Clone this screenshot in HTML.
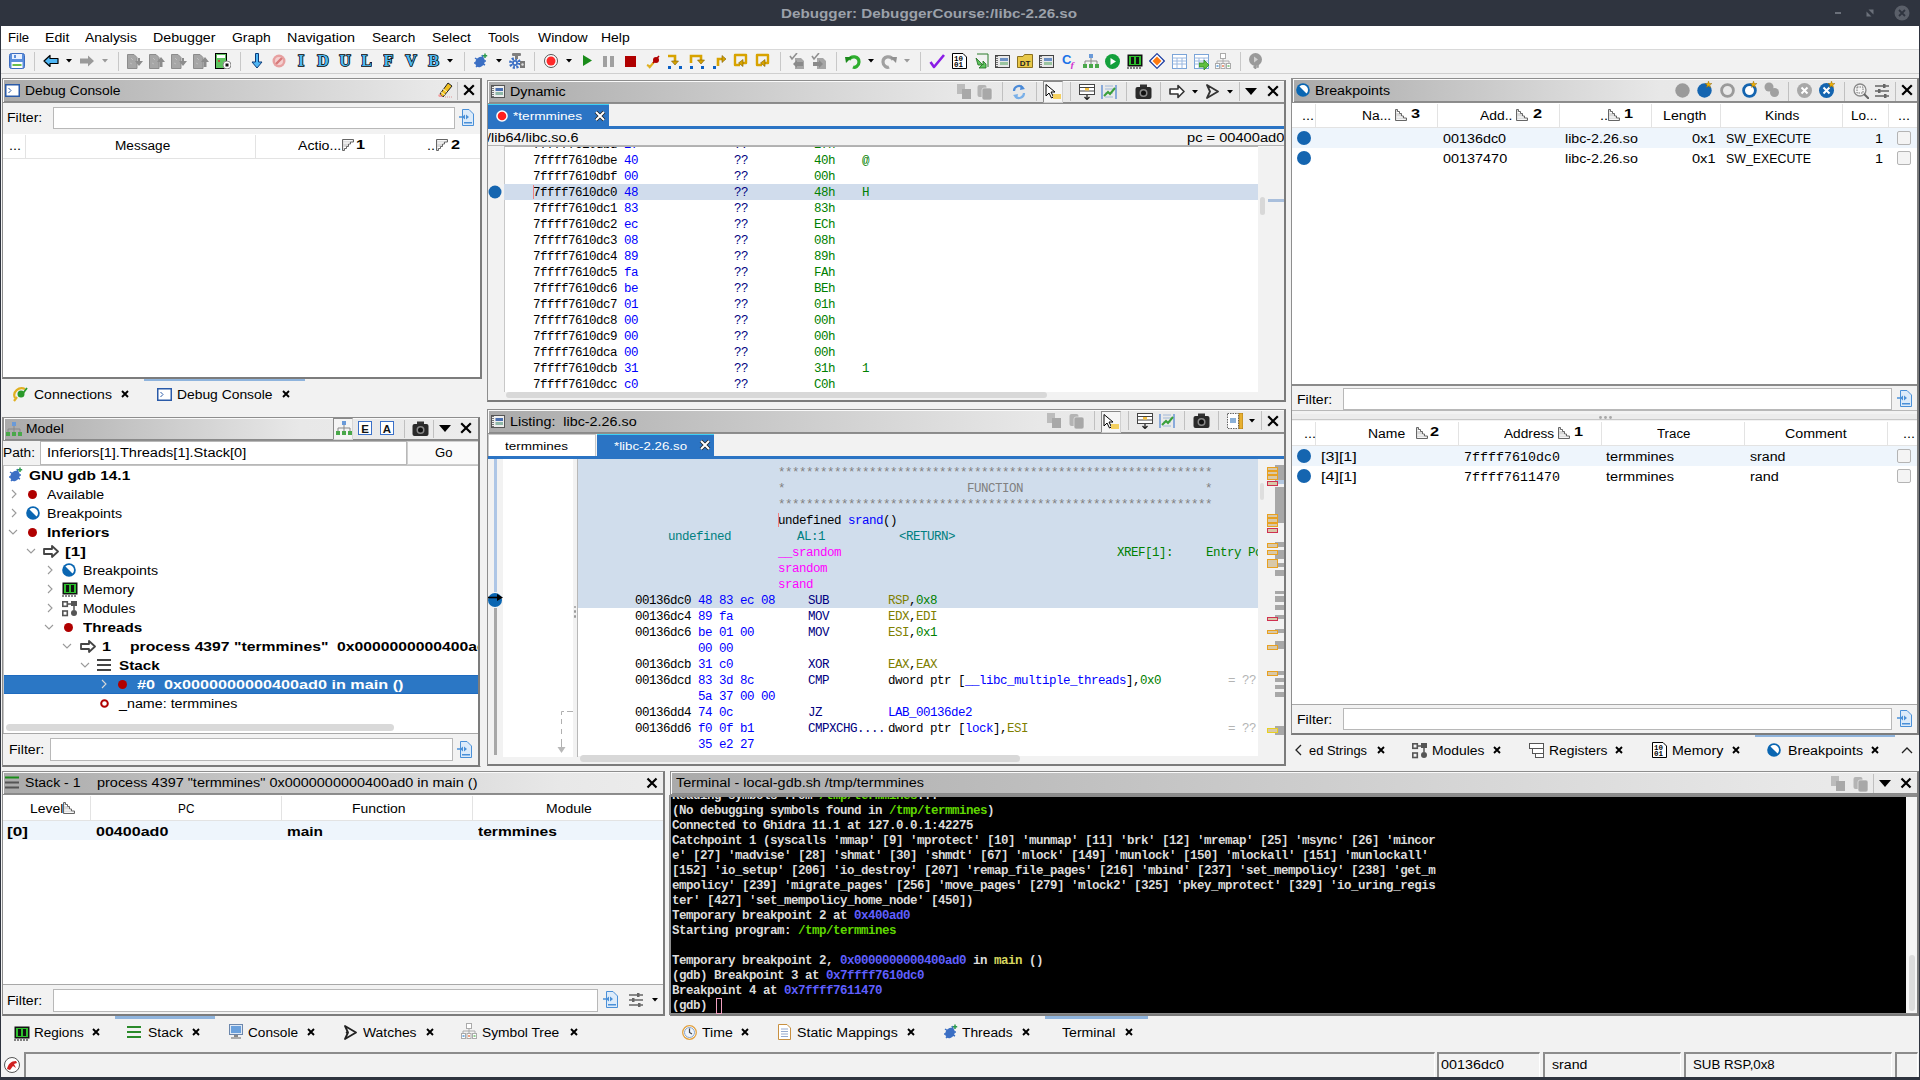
<!DOCTYPE html>
<html><head><meta charset="utf-8"><style>
*{margin:0;padding:0;box-sizing:border-box}
html,body{width:1920px;height:1080px;overflow:hidden;background:#f2f2f2;position:relative}
div,svg{position:absolute}
.t{font-family:"Liberation Sans",sans-serif;white-space:pre}
.m{font-family:"Liberation Mono",monospace;white-space:pre}
</style></head><body>
<div style="left:0px;top:0px;width:1920px;height:1080px;background:#2f343f;"></div>
<div style="left:1px;top:26px;width:1918px;height:1051px;background:#f2f2f2;"></div>
<div class="t" style="left:781px;top:4.00px;height:20px;line-height:20px;font-size:13.52px;color:#9ca1aa;font-weight:bold;transform:scaleX(1.1265);transform-origin:0 0;">Debugger: DebuggerCourse:/libc-2.26.so</div>
<div style="left:1835px;top:12px;width:6px;height:2px;background:#6b707a;"></div>
<svg style="left:1866px;top:9px;" width="8" height="8" viewBox="0 0 8 8"><path d="M2.5 0.5H7.5V5.5Z M0.5 2.5V7.5H5.5Z" fill="#6b707a"/></svg>
<svg style="left:1894px;top:5px;" width="16" height="16" viewBox="0 0 16 16"><circle cx="8" cy="8" r="7.5" fill="#5a5f69"/><path d="M5 5L11 11M11 5L5 11" stroke="#2f343f" stroke-width="1.8"/></svg>
<div style="left:1px;top:26px;width:1918px;height:23px;background:#ffffff;"></div>
<div class="t" style="left:8px;top:27.50px;height:20px;line-height:20px;font-size:13.52px;color:#000;transform:scaleX(0.9693);transform-origin:0 0;">File</div>
<div class="t" style="left:45px;top:27.50px;height:20px;line-height:20px;font-size:13.52px;color:#000;transform:scaleX(1.0488);transform-origin:0 0;">Edit</div>
<div class="t" style="left:85px;top:27.50px;height:20px;line-height:20px;font-size:13.52px;color:#000;transform:scaleX(1.0314);transform-origin:0 0;">Analysis</div>
<div class="t" style="left:153px;top:27.50px;height:20px;line-height:20px;font-size:13.52px;color:#000;transform:scaleX(1.0515);transform-origin:0 0;">Debugger</div>
<div class="t" style="left:232px;top:27.50px;height:20px;line-height:20px;font-size:13.52px;color:#000;transform:scaleX(1.0297);transform-origin:0 0;">Graph</div>
<div class="t" style="left:287px;top:27.50px;height:20px;line-height:20px;font-size:13.52px;color:#000;transform:scaleX(1.0647);transform-origin:0 0;">Navigation</div>
<div class="t" style="left:372px;top:27.50px;height:20px;line-height:20px;font-size:13.52px;color:#000;transform:scaleX(1.0114);transform-origin:0 0;">Search</div>
<div class="t" style="left:432px;top:27.50px;height:20px;line-height:20px;font-size:13.52px;color:#000;transform:scaleX(1.0354);transform-origin:0 0;">Select</div>
<div class="t" style="left:488px;top:27.50px;height:20px;line-height:20px;font-size:13.52px;color:#000;transform:scaleX(0.9844);transform-origin:0 0;">Tools</div>
<div class="t" style="left:538px;top:27.50px;height:20px;line-height:20px;font-size:13.52px;color:#000;transform:scaleX(1.0343);transform-origin:0 0;">Window</div>
<div class="t" style="left:601px;top:27.50px;height:20px;line-height:20px;font-size:13.52px;color:#000;transform:scaleX(1.0343);transform-origin:0 0;">Help</div>
<div style="left:1px;top:49px;width:1918px;height:1px;background:#d9d9d9;"></div>
<div style="left:1px;top:73px;width:1918px;height:1px;background:#cfcfcf;"></div>
<div style="left:2px;top:78px;width:479px;height:25px;background:linear-gradient(to right,#aaaaaa 0%,#e8e8e8 89.4%,#ececec 100%);border:1px solid #8e8e8e;box-shadow:inset 1px 1px 0 #fafafa,inset 0 -1px 0 #8a8a8a;"></div>
<div class="t" style="left:25px;top:80.50px;height:20px;line-height:20px;font-size:13.52px;color:#000;transform:scaleX(1.0251);transform-origin:0 0;">Debug Console</div>
<div style="left:2px;top:103px;width:479px;height:31px;background:#f2f2f2;"></div>
<div class="t" style="left:7px;top:107.50px;height:20px;line-height:20px;font-size:13.52px;color:#000;transform:scaleX(1.0436);transform-origin:0 0;">Filter:</div>
<div style="left:53px;top:107px;width:402px;height:22px;background:#fff;border:1px solid #b8b8b8;"></div>
<div style="left:2px;top:134px;width:478px;height:244px;background:#ffffff;border-left:1px solid #b0b0b0;"></div>
<div style="left:2px;top:134px;width:478px;height:25px;background:#ffffff;border-bottom:1px solid #e3e3e3;"></div>
<div style="left:25px;top:135px;width:1px;height:24px;background:#e3e3e3;"></div>
<div style="left:255px;top:135px;width:1px;height:24px;background:#e3e3e3;"></div>
<div style="left:384px;top:135px;width:1px;height:24px;background:#e3e3e3;"></div>
<div class="t" style="left:9px;top:136.00px;height:20px;line-height:20px;font-size:13.52px;color:#000;transform:scaleX(1.0670);transform-origin:0 0;">...</div>
<div class="t" style="left:115px;top:136.00px;height:20px;line-height:20px;font-size:13.52px;color:#000;transform:scaleX(1.0073);transform-origin:0 0;">Message</div>
<div class="t" style="left:298px;top:136.00px;height:20px;line-height:20px;font-size:13.52px;color:#000;transform:scaleX(1.0474);transform-origin:0 0;">Actio...</div>
<div class="t" style="left:356px;top:134.50px;height:20px;line-height:20px;font-size:13.52px;color:#000;font-weight:bold;transform:scaleX(1.2037);transform-origin:0 0;">1</div>
<div class="t" style="left:427px;top:136.00px;height:20px;line-height:20px;font-size:13.52px;color:#000;transform:scaleX(1.0670);transform-origin:0 0;">..</div>
<div class="t" style="left:451px;top:134.50px;height:20px;line-height:20px;font-size:13.52px;color:#000;font-weight:bold;transform:scaleX(1.2037);transform-origin:0 0;">2</div>
<div style="left:2px;top:377px;width:478px;height:1px;background:#a8a8a8;"></div>
<div style="left:144px;top:378px;width:161px;height:3px;background:#8fb4dd;"></div>
<div class="t" style="left:34px;top:384.50px;height:20px;line-height:20px;font-size:13.52px;color:#000;transform:scaleX(1.0366);transform-origin:0 0;">Connections</div>
<svg style="left:120.5px;top:390px;" width="8" height="8" viewBox="0 0 8 8"><path d="M1 1L7 7M7 1L1 7" stroke="#000" stroke-width="1.9"/></svg>
<div class="t" style="left:177px;top:384.50px;height:20px;line-height:20px;font-size:13.52px;color:#000;transform:scaleX(1.0251);transform-origin:0 0;">Debug Console</div>
<svg style="left:281.5px;top:390px;" width="8" height="8" viewBox="0 0 8 8"><path d="M1 1L7 7M7 1L1 7" stroke="#000" stroke-width="1.9"/></svg>
<div style="left:3px;top:417px;width:476px;height:24px;background:linear-gradient(to right,#aaaaaa 0%,#e8e8e8 62.4%,#ececec 100%);border:1px solid #8e8e8e;box-shadow:inset 1px 1px 0 #fafafa,inset 0 -1px 0 #8a8a8a;"></div>
<div class="t" style="left:26px;top:419.00px;height:20px;line-height:20px;font-size:13.52px;color:#000;transform:scaleX(1.0285);transform-origin:0 0;">Model</div>
<div style="left:333px;top:418px;width:20px;height:22px;background:#f4f4f4;border:1px solid #d6d6d6;border-left-color:#8a8a8a;border-top-color:#8a8a8a;"></div>
<div style="left:3px;top:441px;width:476px;height:24px;background:#f2f2f2;"></div>
<div class="t" style="left:3px;top:442.50px;height:20px;line-height:20px;font-size:13.52px;color:#000;transform:scaleX(1.0128);transform-origin:0 0;">Path:</div>
<div style="left:40px;top:441px;width:367px;height:24px;background:#fff;border:1px solid #b8b8b8;"></div>
<div class="t" style="left:47px;top:442.50px;height:20px;line-height:20px;font-size:13.52px;color:#000;transform:scaleX(1.0783);transform-origin:0 0;">Inferiors[1].Threads[1].Stack[0]</div>
<div style="left:407px;top:441px;width:72px;height:24px;background:#fafafa;border:1px solid #cfcfcf;"></div>
<div class="t" style="left:435px;top:442.50px;height:20px;line-height:20px;font-size:13.52px;color:#000;transform:scaleX(0.9700);transform-origin:0 0;">Go</div>
<div style="left:3px;top:465px;width:476px;height:269px;background:#ffffff;border:1px solid #c4c4c4;"></div>
<div style="left:4px;top:675px;width:474px;height:19px;background:#2b77c5;border-top:1px solid #1f6bbf;border-bottom:1px solid #1f6bbf;"></div>
<div style="left:4px;top:466px;width:474px;height:256px;overflow:hidden">
<div class="t" style="left:25px;top:-0.50px;height:20px;line-height:20px;font-size:13.52px;color:#000;font-weight:bold;transform:scaleX(1.1422);transform-origin:0 0;">GNU gdb 14.1</div>
<div class="t" style="left:43px;top:18.50px;height:20px;line-height:20px;font-size:13.52px;color:#000;transform:scaleX(1.0452);transform-origin:0 0;">Available</div>
<div class="t" style="left:43px;top:37.50px;height:20px;line-height:20px;font-size:13.52px;color:#000;transform:scaleX(1.0518);transform-origin:0 0;">Breakpoints</div>
<div class="t" style="left:43px;top:56.50px;height:20px;line-height:20px;font-size:13.52px;color:#000;font-weight:bold;transform:scaleX(1.1561);transform-origin:0 0;">Inferiors</div>
<div class="t" style="left:61px;top:75.50px;height:20px;line-height:20px;font-size:13.52px;color:#000;font-weight:bold;transform:scaleX(1.2668);transform-origin:0 0;">[1]</div>
<div class="t" style="left:79px;top:94.50px;height:20px;line-height:20px;font-size:13.52px;color:#000;transform:scaleX(1.0518);transform-origin:0 0;">Breakpoints</div>
<div class="t" style="left:79px;top:113.50px;height:20px;line-height:20px;font-size:13.52px;color:#000;transform:scaleX(1.0501);transform-origin:0 0;">Memory</div>
<div class="t" style="left:79px;top:132.50px;height:20px;line-height:20px;font-size:13.52px;color:#000;transform:scaleX(1.0258);transform-origin:0 0;">Modules</div>
<div class="t" style="left:79px;top:151.50px;height:20px;line-height:20px;font-size:13.52px;color:#000;font-weight:bold;transform:scaleX(1.1254);transform-origin:0 0;">Threads</div>
<div class="t" style="left:98px;top:170.50px;height:20px;line-height:20px;font-size:13.52px;color:#000;font-weight:bold;transform:scaleX(1.2037);transform-origin:0 0;">1</div>
<div class="t" style="left:126px;top:170.50px;height:20px;line-height:20px;font-size:13.52px;color:#000;font-weight:bold;transform:scaleX(1.1626);transform-origin:0 0;">process 4397 "termmines"  0x0000000000400ad</div>
<div class="t" style="left:115px;top:189.50px;height:20px;line-height:20px;font-size:13.52px;color:#000;font-weight:bold;transform:scaleX(1.1282);transform-origin:0 0;">Stack</div>
<div class="t" style="left:133px;top:208.50px;height:20px;line-height:20px;font-size:13.52px;color:#fff;font-weight:bold;transform:scaleX(1.1980);transform-origin:0 0;">#0  0x0000000000400ad0 in main ()</div>
<div class="t" style="left:115px;top:227.50px;height:20px;line-height:20px;font-size:13.52px;color:#000;transform:scaleX(1.0572);transform-origin:0 0;">_name: termmines</div>
</div>
<div style="left:6px;top:724px;width:388px;height:7px;background:#d9d9d9;border-radius:4px;"></div>
<div style="left:3px;top:733px;width:476px;height:1px;background:#a8a8a8;"></div>
<div style="left:3px;top:734px;width:476px;height:31px;background:#f2f2f2;"></div>
<div class="t" style="left:9px;top:739.50px;height:20px;line-height:20px;font-size:13.52px;color:#000;transform:scaleX(1.0436);transform-origin:0 0;">Filter:</div>
<div style="left:50px;top:738px;width:403px;height:23px;background:#fff;border:1px solid #b8b8b8;"></div>
<div style="left:2px;top:766px;width:479px;height:1px;background:#b8b8b8;"></div>
<div style="left:2px;top:771px;width:663px;height:24px;background:linear-gradient(to right,#aaaaaa 0%,#e8e8e8 84.2%,#ececec 100%);border:1px solid #8e8e8e;box-shadow:inset 1px 1px 0 #fafafa,inset 0 -1px 0 #8a8a8a;"></div>
<div class="t" style="left:25px;top:773.00px;height:20px;line-height:20px;font-size:13.52px;color:#000;transform:scaleX(1.0402);transform-origin:0 0;">Stack - 1</div>
<div class="t" style="left:97px;top:773.00px;height:20px;line-height:20px;font-size:13.52px;color:#000;transform:scaleX(1.0688);transform-origin:0 0;">process 4397 "termmines" 0x0000000000400ad0 in main ()</div>
<svg style="left:646px;top:777px;" width="12" height="12" viewBox="0 0 12 12"><path d="M1.5 1.5L10.5 10.5M10.5 1.5L1.5 10.5" stroke="#000" stroke-width="2.2" stroke-linecap="butt"/></svg>
<div style="left:2px;top:795px;width:662px;height:190px;background:#ffffff;"></div>
<div style="left:2px;top:795px;width:662px;height:26px;background:#ffffff;border-bottom:1px solid #e3e3e3;"></div>
<div style="left:90px;top:796px;width:1px;height:25px;background:#e3e3e3;"></div>
<div style="left:281px;top:796px;width:1px;height:25px;background:#e3e3e3;"></div>
<div style="left:472px;top:796px;width:1px;height:25px;background:#e3e3e3;"></div>
<div style="left:663px;top:796px;width:1px;height:25px;background:#e3e3e3;"></div>
<div class="t" style="left:30px;top:798.50px;height:20px;line-height:20px;font-size:13.52px;color:#000;transform:scaleX(1.0300);transform-origin:0 0;">Level</div>
<div class="t" style="left:178px;top:798.50px;height:20px;line-height:20px;font-size:13.52px;color:#000;transform:scaleX(0.8740);transform-origin:0 0;">PC</div>
<div class="t" style="left:352px;top:798.50px;height:20px;line-height:20px;font-size:13.52px;color:#000;transform:scaleX(1.0346);transform-origin:0 0;">Function</div>
<div class="t" style="left:546px;top:798.50px;height:20px;line-height:20px;font-size:13.52px;color:#000;transform:scaleX(1.0343);transform-origin:0 0;">Module</div>
<div style="left:2px;top:821px;width:662px;height:19px;background:#eef5fc;"></div>
<div class="t" style="left:7px;top:821.50px;height:20px;line-height:20px;font-size:13.52px;color:#000;font-weight:bold;transform:scaleX(1.2668);transform-origin:0 0;">[0]</div>
<div class="t" style="left:96px;top:821.50px;height:20px;line-height:20px;font-size:13.52px;color:#000;font-weight:bold;transform:scaleX(1.1890);transform-origin:0 0;">00400ad0</div>
<div class="t" style="left:287px;top:821.50px;height:20px;line-height:20px;font-size:13.52px;color:#000;font-weight:bold;transform:scaleX(1.1422);transform-origin:0 0;">main</div>
<div class="t" style="left:478px;top:821.50px;height:20px;line-height:20px;font-size:13.52px;color:#000;font-weight:bold;transform:scaleX(1.1527);transform-origin:0 0;">termmines</div>
<div style="left:2px;top:984px;width:662px;height:1px;background:#a8a8a8;"></div>
<div class="t" style="left:7px;top:990.50px;height:20px;line-height:20px;font-size:13.52px;color:#000;transform:scaleX(1.0436);transform-origin:0 0;">Filter:</div>
<div style="left:53px;top:989px;width:545px;height:23px;background:#fff;border:1px solid #b8b8b8;"></div>
<div style="left:115px;top:1016px;width:100px;height:3px;background:#8fb4dd;"></div>
<div class="t" style="left:34px;top:1022.50px;height:20px;line-height:20px;font-size:13.52px;color:#000;transform:scaleX(1.0027);transform-origin:0 0;">Regions</div>
<svg style="left:91.5px;top:1028px;" width="8" height="8" viewBox="0 0 8 8"><path d="M1 1L7 7M7 1L1 7" stroke="#000" stroke-width="1.9"/></svg>
<div class="t" style="left:148px;top:1022.50px;height:20px;line-height:20px;font-size:13.52px;color:#000;transform:scaleX(1.0323);transform-origin:0 0;">Stack</div>
<svg style="left:191.5px;top:1028px;" width="8" height="8" viewBox="0 0 8 8"><path d="M1 1L7 7M7 1L1 7" stroke="#000" stroke-width="1.9"/></svg>
<div class="t" style="left:248px;top:1022.50px;height:20px;line-height:20px;font-size:13.52px;color:#000;transform:scaleX(1.0091);transform-origin:0 0;">Console</div>
<svg style="left:306.5px;top:1028px;" width="8" height="8" viewBox="0 0 8 8"><path d="M1 1L7 7M7 1L1 7" stroke="#000" stroke-width="1.9"/></svg>
<div class="t" style="left:363px;top:1022.50px;height:20px;line-height:20px;font-size:13.52px;color:#000;transform:scaleX(1.0288);transform-origin:0 0;">Watches</div>
<svg style="left:425.5px;top:1028px;" width="8" height="8" viewBox="0 0 8 8"><path d="M1 1L7 7M7 1L1 7" stroke="#000" stroke-width="1.9"/></svg>
<div class="t" style="left:482px;top:1022.50px;height:20px;line-height:20px;font-size:13.52px;color:#000;transform:scaleX(1.0182);transform-origin:0 0;">Symbol Tree</div>
<svg style="left:569.5px;top:1028px;" width="8" height="8" viewBox="0 0 8 8"><path d="M1 1L7 7M7 1L1 7" stroke="#000" stroke-width="1.9"/></svg>
<div style="left:487px;top:80px;width:798px;height:24px;background:linear-gradient(to right,#aaaaaa 0%,#e8e8e8 59.3%,#ececec 100%);border:1px solid #8e8e8e;box-shadow:inset 1px 1px 0 #fafafa,inset 0 -1px 0 #8a8a8a;"></div>
<div class="t" style="left:510px;top:82.00px;height:20px;line-height:20px;font-size:13.52px;color:#000;transform:scaleX(1.0570);transform-origin:0 0;">Dynamic</div>
<div style="left:487px;top:104px;width:798px;height:25px;background:#f2f2f2;"></div>
<div style="left:488px;top:104px;width:121px;height:23px;background:#2b74c4;border-top:1px solid #3fd0f4;"></div>
<div class="t" style="left:513px;top:106.00px;height:20px;line-height:20px;font-size:11.50px;color:#fff;transform:scaleX(1.1871);transform-origin:0 0;">*termmines</div>
<svg style="left:594px;top:110px;" width="12" height="12" viewBox="0 0 12 12"><path d="M2 2L10 10M10 2L2 10" stroke="#222" stroke-width="3.6"/><path d="M2 2L10 10M10 2L2 10" stroke="#fff" stroke-width="2"/></svg>
<div style="left:487px;top:126px;width:798px;height:3px;background:#2b74c4;"></div>
<div style="left:487px;top:129px;width:798px;height:17px;background:#f2f2f2;"></div>
<div class="t" style="left:487px;top:127.50px;height:20px;line-height:20px;font-size:13.52px;color:#000;transform:scaleX(1.0689);transform-origin:0 0;">/lib64/libc.so.6</div>
<div class="t" style="left:1187px;top:127.50px;height:20px;line-height:20px;font-size:13.52px;color:#000;transform:scaleX(1.0839);transform-origin:0 0;">pc = 00400ad0</div>
<div style="left:487px;top:146px;width:17px;height:252px;background:#f2f2f2;"></div>
<div style="left:504px;top:146px;width:754px;height:246px;background:#ffffff;border-top:1px solid #b0b0b0;border-left:1px solid #c8c8c8;"></div>
<div style="left:1258px;top:146px;width:27px;height:252px;background:#f2f2f2;"></div>
<div style="left:487px;top:145px;width:798px;height:1px;background:#b4b4b4;"></div>
<div style="left:504px;top:184px;width:754px;height:16px;background:#d0dcec;"></div>
<div style="left:505px;top:392px;width:753px;height:7px;background:#f2f2f2;"></div>
<div style="left:506px;top:392px;width:541px;height:6px;background:#d8d8d8;border-radius:3px;"></div>
<div style="left:1260px;top:197px;width:5px;height:18px;background:#d8d8d8;border-radius:3px;"></div>
<div style="left:1268px;top:199px;width:16px;height:3px;background:#a9bfdc;"></div>
<div style="left:487px;top:400px;width:798px;height:1px;background:#a0a0a0;"></div>
<div style="left:504px;top:147px;width:754px;height:245px;overflow:hidden">
<div class="m" style="left:29px;top:-9.80px;height:16px;line-height:16px;font-size:12.5px;letter-spacing:-0.500px;"><span style="color:#000">7ffff7610dbd</span></div>
<div class="m" style="left:120px;top:-9.80px;height:16px;line-height:16px;font-size:12.5px;letter-spacing:-0.500px;"><span style="color:#0000ff">27</span></div>
<div class="m" style="left:230px;top:-9.80px;height:16px;line-height:16px;font-size:12.5px;letter-spacing:-0.500px;"><span style="color:#000080">??</span></div>
<div class="m" style="left:310px;top:-9.80px;height:16px;line-height:16px;font-size:12.5px;letter-spacing:-0.500px;"><span style="color:#008000">27h</span></div>
<div class="m" style="left:29px;top:6.20px;height:16px;line-height:16px;font-size:12.5px;letter-spacing:-0.500px;"><span style="color:#000">7ffff7610dbe</span></div>
<div class="m" style="left:120px;top:6.20px;height:16px;line-height:16px;font-size:12.5px;letter-spacing:-0.500px;"><span style="color:#0000ff">40</span></div>
<div class="m" style="left:230px;top:6.20px;height:16px;line-height:16px;font-size:12.5px;letter-spacing:-0.500px;"><span style="color:#000080">??</span></div>
<div class="m" style="left:310px;top:6.20px;height:16px;line-height:16px;font-size:12.5px;letter-spacing:-0.500px;"><span style="color:#008000">40h</span></div>
<div class="m" style="left:358px;top:6.20px;height:16px;line-height:16px;font-size:12.5px;letter-spacing:-0.500px;"><span style="color:#008000">@</span></div>
<div class="m" style="left:29px;top:22.20px;height:16px;line-height:16px;font-size:12.5px;letter-spacing:-0.500px;"><span style="color:#000">7ffff7610dbf</span></div>
<div class="m" style="left:120px;top:22.20px;height:16px;line-height:16px;font-size:12.5px;letter-spacing:-0.500px;"><span style="color:#0000ff">00</span></div>
<div class="m" style="left:230px;top:22.20px;height:16px;line-height:16px;font-size:12.5px;letter-spacing:-0.500px;"><span style="color:#000080">??</span></div>
<div class="m" style="left:310px;top:22.20px;height:16px;line-height:16px;font-size:12.5px;letter-spacing:-0.500px;"><span style="color:#008000">00h</span></div>
<div class="m" style="left:29px;top:38.20px;height:16px;line-height:16px;font-size:12.5px;letter-spacing:-0.500px;"><span style="color:#000">7ffff7610dc0</span></div>
<div class="m" style="left:120px;top:38.20px;height:16px;line-height:16px;font-size:12.5px;letter-spacing:-0.500px;"><span style="color:#0000ff">48</span></div>
<div class="m" style="left:230px;top:38.20px;height:16px;line-height:16px;font-size:12.5px;letter-spacing:-0.500px;"><span style="color:#000080">??</span></div>
<div class="m" style="left:310px;top:38.20px;height:16px;line-height:16px;font-size:12.5px;letter-spacing:-0.500px;"><span style="color:#008000">48h</span></div>
<div class="m" style="left:358px;top:38.20px;height:16px;line-height:16px;font-size:12.5px;letter-spacing:-0.500px;"><span style="color:#008000">H</span></div>
<div class="m" style="left:29px;top:54.20px;height:16px;line-height:16px;font-size:12.5px;letter-spacing:-0.500px;"><span style="color:#000">7ffff7610dc1</span></div>
<div class="m" style="left:120px;top:54.20px;height:16px;line-height:16px;font-size:12.5px;letter-spacing:-0.500px;"><span style="color:#0000ff">83</span></div>
<div class="m" style="left:230px;top:54.20px;height:16px;line-height:16px;font-size:12.5px;letter-spacing:-0.500px;"><span style="color:#000080">??</span></div>
<div class="m" style="left:310px;top:54.20px;height:16px;line-height:16px;font-size:12.5px;letter-spacing:-0.500px;"><span style="color:#008000">83h</span></div>
<div class="m" style="left:29px;top:70.20px;height:16px;line-height:16px;font-size:12.5px;letter-spacing:-0.500px;"><span style="color:#000">7ffff7610dc2</span></div>
<div class="m" style="left:120px;top:70.20px;height:16px;line-height:16px;font-size:12.5px;letter-spacing:-0.500px;"><span style="color:#0000ff">ec</span></div>
<div class="m" style="left:230px;top:70.20px;height:16px;line-height:16px;font-size:12.5px;letter-spacing:-0.500px;"><span style="color:#000080">??</span></div>
<div class="m" style="left:310px;top:70.20px;height:16px;line-height:16px;font-size:12.5px;letter-spacing:-0.500px;"><span style="color:#008000">ECh</span></div>
<div class="m" style="left:29px;top:86.20px;height:16px;line-height:16px;font-size:12.5px;letter-spacing:-0.500px;"><span style="color:#000">7ffff7610dc3</span></div>
<div class="m" style="left:120px;top:86.20px;height:16px;line-height:16px;font-size:12.5px;letter-spacing:-0.500px;"><span style="color:#0000ff">08</span></div>
<div class="m" style="left:230px;top:86.20px;height:16px;line-height:16px;font-size:12.5px;letter-spacing:-0.500px;"><span style="color:#000080">??</span></div>
<div class="m" style="left:310px;top:86.20px;height:16px;line-height:16px;font-size:12.5px;letter-spacing:-0.500px;"><span style="color:#008000">08h</span></div>
<div class="m" style="left:29px;top:102.20px;height:16px;line-height:16px;font-size:12.5px;letter-spacing:-0.500px;"><span style="color:#000">7ffff7610dc4</span></div>
<div class="m" style="left:120px;top:102.20px;height:16px;line-height:16px;font-size:12.5px;letter-spacing:-0.500px;"><span style="color:#0000ff">89</span></div>
<div class="m" style="left:230px;top:102.20px;height:16px;line-height:16px;font-size:12.5px;letter-spacing:-0.500px;"><span style="color:#000080">??</span></div>
<div class="m" style="left:310px;top:102.20px;height:16px;line-height:16px;font-size:12.5px;letter-spacing:-0.500px;"><span style="color:#008000">89h</span></div>
<div class="m" style="left:29px;top:118.20px;height:16px;line-height:16px;font-size:12.5px;letter-spacing:-0.500px;"><span style="color:#000">7ffff7610dc5</span></div>
<div class="m" style="left:120px;top:118.20px;height:16px;line-height:16px;font-size:12.5px;letter-spacing:-0.500px;"><span style="color:#0000ff">fa</span></div>
<div class="m" style="left:230px;top:118.20px;height:16px;line-height:16px;font-size:12.5px;letter-spacing:-0.500px;"><span style="color:#000080">??</span></div>
<div class="m" style="left:310px;top:118.20px;height:16px;line-height:16px;font-size:12.5px;letter-spacing:-0.500px;"><span style="color:#008000">FAh</span></div>
<div class="m" style="left:29px;top:134.20px;height:16px;line-height:16px;font-size:12.5px;letter-spacing:-0.500px;"><span style="color:#000">7ffff7610dc6</span></div>
<div class="m" style="left:120px;top:134.20px;height:16px;line-height:16px;font-size:12.5px;letter-spacing:-0.500px;"><span style="color:#0000ff">be</span></div>
<div class="m" style="left:230px;top:134.20px;height:16px;line-height:16px;font-size:12.5px;letter-spacing:-0.500px;"><span style="color:#000080">??</span></div>
<div class="m" style="left:310px;top:134.20px;height:16px;line-height:16px;font-size:12.5px;letter-spacing:-0.500px;"><span style="color:#008000">BEh</span></div>
<div class="m" style="left:29px;top:150.20px;height:16px;line-height:16px;font-size:12.5px;letter-spacing:-0.500px;"><span style="color:#000">7ffff7610dc7</span></div>
<div class="m" style="left:120px;top:150.20px;height:16px;line-height:16px;font-size:12.5px;letter-spacing:-0.500px;"><span style="color:#0000ff">01</span></div>
<div class="m" style="left:230px;top:150.20px;height:16px;line-height:16px;font-size:12.5px;letter-spacing:-0.500px;"><span style="color:#000080">??</span></div>
<div class="m" style="left:310px;top:150.20px;height:16px;line-height:16px;font-size:12.5px;letter-spacing:-0.500px;"><span style="color:#008000">01h</span></div>
<div class="m" style="left:29px;top:166.20px;height:16px;line-height:16px;font-size:12.5px;letter-spacing:-0.500px;"><span style="color:#000">7ffff7610dc8</span></div>
<div class="m" style="left:120px;top:166.20px;height:16px;line-height:16px;font-size:12.5px;letter-spacing:-0.500px;"><span style="color:#0000ff">00</span></div>
<div class="m" style="left:230px;top:166.20px;height:16px;line-height:16px;font-size:12.5px;letter-spacing:-0.500px;"><span style="color:#000080">??</span></div>
<div class="m" style="left:310px;top:166.20px;height:16px;line-height:16px;font-size:12.5px;letter-spacing:-0.500px;"><span style="color:#008000">00h</span></div>
<div class="m" style="left:29px;top:182.20px;height:16px;line-height:16px;font-size:12.5px;letter-spacing:-0.500px;"><span style="color:#000">7ffff7610dc9</span></div>
<div class="m" style="left:120px;top:182.20px;height:16px;line-height:16px;font-size:12.5px;letter-spacing:-0.500px;"><span style="color:#0000ff">00</span></div>
<div class="m" style="left:230px;top:182.20px;height:16px;line-height:16px;font-size:12.5px;letter-spacing:-0.500px;"><span style="color:#000080">??</span></div>
<div class="m" style="left:310px;top:182.20px;height:16px;line-height:16px;font-size:12.5px;letter-spacing:-0.500px;"><span style="color:#008000">00h</span></div>
<div class="m" style="left:29px;top:198.20px;height:16px;line-height:16px;font-size:12.5px;letter-spacing:-0.500px;"><span style="color:#000">7ffff7610dca</span></div>
<div class="m" style="left:120px;top:198.20px;height:16px;line-height:16px;font-size:12.5px;letter-spacing:-0.500px;"><span style="color:#0000ff">00</span></div>
<div class="m" style="left:230px;top:198.20px;height:16px;line-height:16px;font-size:12.5px;letter-spacing:-0.500px;"><span style="color:#000080">??</span></div>
<div class="m" style="left:310px;top:198.20px;height:16px;line-height:16px;font-size:12.5px;letter-spacing:-0.500px;"><span style="color:#008000">00h</span></div>
<div class="m" style="left:29px;top:214.20px;height:16px;line-height:16px;font-size:12.5px;letter-spacing:-0.500px;"><span style="color:#000">7ffff7610dcb</span></div>
<div class="m" style="left:120px;top:214.20px;height:16px;line-height:16px;font-size:12.5px;letter-spacing:-0.500px;"><span style="color:#0000ff">31</span></div>
<div class="m" style="left:230px;top:214.20px;height:16px;line-height:16px;font-size:12.5px;letter-spacing:-0.500px;"><span style="color:#000080">??</span></div>
<div class="m" style="left:310px;top:214.20px;height:16px;line-height:16px;font-size:12.5px;letter-spacing:-0.500px;"><span style="color:#008000">31h</span></div>
<div class="m" style="left:358px;top:214.20px;height:16px;line-height:16px;font-size:12.5px;letter-spacing:-0.500px;"><span style="color:#008000">1</span></div>
<div class="m" style="left:29px;top:230.20px;height:16px;line-height:16px;font-size:12.5px;letter-spacing:-0.500px;"><span style="color:#000">7ffff7610dcc</span></div>
<div class="m" style="left:120px;top:230.20px;height:16px;line-height:16px;font-size:12.5px;letter-spacing:-0.500px;"><span style="color:#0000ff">c0</span></div>
<div class="m" style="left:230px;top:230.20px;height:16px;line-height:16px;font-size:12.5px;letter-spacing:-0.500px;"><span style="color:#000080">??</span></div>
<div class="m" style="left:310px;top:230.20px;height:16px;line-height:16px;font-size:12.5px;letter-spacing:-0.500px;"><span style="color:#008000">C0h</span></div>
</div>
<div style="left:533px;top:185px;width:1px;height:14px;background:#f08080;"></div>
<svg style="left:488px;top:185px;" width="14" height="14" viewBox="0 0 14 14"><circle cx="7" cy="7" r="6.5" fill="#1565b0"/></svg>
<div style="left:487px;top:409px;width:798px;height:25px;background:linear-gradient(to right,#aaaaaa 0%,#e8e8e8 69.3%,#ececec 100%);border:1px solid #8e8e8e;box-shadow:inset 1px 1px 0 #fafafa,inset 0 -1px 0 #8a8a8a;"></div>
<div class="t" style="left:510px;top:411.50px;height:20px;line-height:20px;font-size:13.52px;color:#000;transform:scaleX(1.0600);transform-origin:0 0;">Listing:  libc-2.26.so</div>
<div style="left:487px;top:434px;width:798px;height:22px;background:#f2f2f2;"></div>
<div style="left:488px;top:434px;width:108px;height:23px;background:#ffffff;border:1px solid #c8c8c8;border-bottom:none;"></div>
<div class="t" style="left:505px;top:435.50px;height:20px;line-height:20px;font-size:11.50px;color:#000;transform:scaleX(1.1741);transform-origin:0 0;">termmines</div>
<div style="left:597px;top:434px;width:117px;height:23px;background:#2b74c4;border-top:1px solid #3fd0f4;"></div>
<div class="t" style="left:614px;top:435.50px;height:20px;line-height:20px;font-size:11.50px;color:#fff;transform:scaleX(1.1542);transform-origin:0 0;">*libc-2.26.so</div>
<svg style="left:699px;top:439px;" width="12" height="12" viewBox="0 0 12 12"><path d="M2 2L10 10M10 2L2 10" stroke="#222" stroke-width="3.6"/><path d="M2 2L10 10M10 2L2 10" stroke="#fff" stroke-width="2"/></svg>
<div style="left:487px;top:456px;width:798px;height:3px;background:#2b74c4;"></div>
<div style="left:487px;top:459px;width:16px;height:306px;background:#f2f2f2;"></div>
<div style="left:494px;top:459px;width:3px;height:133px;background:#aec6e6;"></div>
<div style="left:494px;top:608px;width:3px;height:147px;background:#a8a8a8;"></div>
<div style="left:503px;top:459px;width:70px;height:298px;background:#ffffff;"></div>
<div style="left:573px;top:459px;width:4px;height:298px;background:#f2f2f2;"></div>
<div style="left:577px;top:459px;width:1px;height:298px;background:#b8b8b8;"></div>
<div style="left:574px;top:605.5px;width:2px;height:2.5px;background:#9c9c9c;border-radius:1px;"></div>
<div style="left:574px;top:610px;width:2px;height:2.5px;background:#9c9c9c;border-radius:1px;"></div>
<div style="left:574px;top:615px;width:2px;height:2.5px;background:#9c9c9c;border-radius:1px;"></div>
<svg style="left:488px;top:592px;" width="16" height="16" viewBox="0 0 16 16"><circle cx="7" cy="8" r="7" fill="#0a66b2"/><path d="M0 5.5H10" stroke="#000" stroke-width="1.6"/><path d="M9 2L15 5.5L9 9Z" fill="#000"/><path d="M10 7V10H13" stroke="#fff" stroke-width="0" fill="none"/></svg>
<svg style="left:555px;top:709px;" width="20" height="46" viewBox="0 0 20 46"><path d="M6.5 2.5H9M12 2.5H18M6.5 2.5V6M6.5 10V15M6.5 20V25M6.5 30V40" stroke="#b0b0b0" stroke-width="1"/><path d="M2.5 38H10.5L6.5 44Z" fill="#b8b8b8"/></svg>
<div style="left:578px;top:459px;width:680px;height:297px;background:#ffffff;"></div>
<div style="left:578px;top:459px;width:680px;height:149px;background:#d0ddec;"></div>
<div style="left:1258px;top:459px;width:27px;height:306px;background:#f2f2f2;"></div>
<div style="left:580px;top:755px;width:440px;height:7px;background:#d8d8d8;border-radius:4px;"></div>
<div style="left:487px;top:764px;width:798px;height:1px;background:#a0a0a0;"></div>
<div style="left:578px;top:459px;width:680px;height:297px;overflow:hidden">
<div class="m" style="left:200px;top:5.70px;height:16px;line-height:16px;font-size:12.5px;letter-spacing:-0.500px;"><span style="color:#808080">**************************************************************</span></div>
<div class="m" style="left:200px;top:21.70px;height:16px;line-height:16px;font-size:12.5px;letter-spacing:-0.500px;"><span style="color:#808080">*                          FUNCTION                          *</span></div>
<div class="m" style="left:200px;top:37.70px;height:16px;line-height:16px;font-size:12.5px;letter-spacing:-0.500px;"><span style="color:#808080">**************************************************************</span></div>
<div class="m" style="left:200px;top:53.70px;height:16px;line-height:16px;font-size:12.5px;letter-spacing:-0.500px;"><span style="color:#000">undefined </span><span style="color:#0000ff">srand</span><span style="color:#000">()</span></div>
<div class="m" style="left:90px;top:69.70px;height:16px;line-height:16px;font-size:12.5px;letter-spacing:-0.500px;"><span style="color:#008080">undefined</span></div>
<div class="m" style="left:219px;top:69.70px;height:16px;line-height:16px;font-size:12.5px;letter-spacing:-0.500px;"><span style="color:#008080">AL:1</span></div>
<div class="m" style="left:321px;top:69.70px;height:16px;line-height:16px;font-size:12.5px;letter-spacing:-0.500px;"><span style="color:#008080">&lt;RETURN&gt;</span></div>
<div class="m" style="left:200px;top:85.70px;height:16px;line-height:16px;font-size:12.5px;letter-spacing:-0.500px;"><span style="color:#ff00ff">__srandom</span></div>
<div class="m" style="left:539px;top:85.70px;height:16px;line-height:16px;font-size:12.5px;letter-spacing:-0.500px;"><span style="color:#008000">XREF[1]:</span></div>
<div class="m" style="left:628px;top:85.70px;height:16px;line-height:16px;font-size:12.5px;letter-spacing:-0.500px;"><span style="color:#008000">Entry Po</span></div>
<div class="m" style="left:200px;top:101.70px;height:16px;line-height:16px;font-size:12.5px;letter-spacing:-0.500px;"><span style="color:#ff00ff">srandom</span></div>
<div class="m" style="left:200px;top:117.70px;height:16px;line-height:16px;font-size:12.5px;letter-spacing:-0.500px;"><span style="color:#ff00ff">srand</span></div>
<div class="m" style="left:57px;top:133.70px;height:16px;line-height:16px;font-size:12.5px;letter-spacing:-0.500px;"><span style="color:#000">00136dc0</span></div>
<div class="m" style="left:120px;top:133.70px;height:16px;line-height:16px;font-size:12.5px;letter-spacing:-0.500px;"><span style="color:#0000ff">48 83 ec 08</span></div>
<div class="m" style="left:230px;top:133.70px;height:16px;line-height:16px;font-size:12.5px;letter-spacing:-0.500px;"><span style="color:#000080">SUB</span></div>
<div class="m" style="left:310px;top:133.70px;height:16px;line-height:16px;font-size:12.5px;letter-spacing:-0.500px;"><span style="color:#808000">RSP</span><span style="color:#000">,</span><span style="color:#008000">0x8</span></div>
<div class="m" style="left:57px;top:149.70px;height:16px;line-height:16px;font-size:12.5px;letter-spacing:-0.500px;"><span style="color:#000">00136dc4</span></div>
<div class="m" style="left:120px;top:149.70px;height:16px;line-height:16px;font-size:12.5px;letter-spacing:-0.500px;"><span style="color:#0000ff">89 fa</span></div>
<div class="m" style="left:230px;top:149.70px;height:16px;line-height:16px;font-size:12.5px;letter-spacing:-0.500px;"><span style="color:#000080">MOV</span></div>
<div class="m" style="left:310px;top:149.70px;height:16px;line-height:16px;font-size:12.5px;letter-spacing:-0.500px;"><span style="color:#808000">EDX</span><span style="color:#000">,</span><span style="color:#808000">EDI</span></div>
<div class="m" style="left:57px;top:165.70px;height:16px;line-height:16px;font-size:12.5px;letter-spacing:-0.500px;"><span style="color:#000">00136dc6</span></div>
<div class="m" style="left:120px;top:165.70px;height:16px;line-height:16px;font-size:12.5px;letter-spacing:-0.500px;"><span style="color:#0000ff">be 01 00</span></div>
<div class="m" style="left:230px;top:165.70px;height:16px;line-height:16px;font-size:12.5px;letter-spacing:-0.500px;"><span style="color:#000080">MOV</span></div>
<div class="m" style="left:310px;top:165.70px;height:16px;line-height:16px;font-size:12.5px;letter-spacing:-0.500px;"><span style="color:#808000">ESI</span><span style="color:#000">,</span><span style="color:#008000">0x1</span></div>
<div class="m" style="left:120px;top:181.70px;height:16px;line-height:16px;font-size:12.5px;letter-spacing:-0.500px;"><span style="color:#0000ff">00 00</span></div>
<div class="m" style="left:57px;top:197.70px;height:16px;line-height:16px;font-size:12.5px;letter-spacing:-0.500px;"><span style="color:#000">00136dcb</span></div>
<div class="m" style="left:120px;top:197.70px;height:16px;line-height:16px;font-size:12.5px;letter-spacing:-0.500px;"><span style="color:#0000ff">31 c0</span></div>
<div class="m" style="left:230px;top:197.70px;height:16px;line-height:16px;font-size:12.5px;letter-spacing:-0.500px;"><span style="color:#000080">XOR</span></div>
<div class="m" style="left:310px;top:197.70px;height:16px;line-height:16px;font-size:12.5px;letter-spacing:-0.500px;"><span style="color:#808000">EAX</span><span style="color:#000">,</span><span style="color:#808000">EAX</span></div>
<div class="m" style="left:57px;top:213.70px;height:16px;line-height:16px;font-size:12.5px;letter-spacing:-0.500px;"><span style="color:#000">00136dcd</span></div>
<div class="m" style="left:120px;top:213.70px;height:16px;line-height:16px;font-size:12.5px;letter-spacing:-0.500px;"><span style="color:#0000ff">83 3d 8c</span></div>
<div class="m" style="left:230px;top:213.70px;height:16px;line-height:16px;font-size:12.5px;letter-spacing:-0.500px;"><span style="color:#000080">CMP</span></div>
<div class="m" style="left:310px;top:213.70px;height:16px;line-height:16px;font-size:12.5px;letter-spacing:-0.500px;"><span style="color:#000">dword ptr [</span><span style="color:#0000ff">__libc_multiple_threads</span><span style="color:#000">],</span><span style="color:#008000">0x0</span></div>
<div class="m" style="left:650px;top:213.70px;height:16px;line-height:16px;font-size:12.5px;letter-spacing:-0.500px;"><span style="color:#b4b4b4">= ??</span></div>
<div class="m" style="left:120px;top:229.70px;height:16px;line-height:16px;font-size:12.5px;letter-spacing:-0.500px;"><span style="color:#0000ff">5a 37 00 00</span></div>
<div class="m" style="left:57px;top:245.70px;height:16px;line-height:16px;font-size:12.5px;letter-spacing:-0.500px;"><span style="color:#000">00136dd4</span></div>
<div class="m" style="left:120px;top:245.70px;height:16px;line-height:16px;font-size:12.5px;letter-spacing:-0.500px;"><span style="color:#0000ff">74 0c</span></div>
<div class="m" style="left:230px;top:245.70px;height:16px;line-height:16px;font-size:12.5px;letter-spacing:-0.500px;"><span style="color:#000080">JZ</span></div>
<div class="m" style="left:310px;top:245.70px;height:16px;line-height:16px;font-size:12.5px;letter-spacing:-0.500px;"><span style="color:#0000ff">LAB_00136de2</span></div>
<div class="m" style="left:57px;top:261.70px;height:16px;line-height:16px;font-size:12.5px;letter-spacing:-0.500px;"><span style="color:#000">00136dd6</span></div>
<div class="m" style="left:120px;top:261.70px;height:16px;line-height:16px;font-size:12.5px;letter-spacing:-0.500px;"><span style="color:#0000ff">f0 0f b1</span></div>
<div class="m" style="left:230px;top:261.70px;height:16px;line-height:16px;font-size:12.5px;letter-spacing:-0.500px;"><span style="color:#000080">CMPXCHG....</span></div>
<div class="m" style="left:310px;top:261.70px;height:16px;line-height:16px;font-size:12.5px;letter-spacing:-0.500px;"><span style="color:#000">dword ptr [</span><span style="color:#0000ff">lock</span><span style="color:#000">],</span><span style="color:#808000">ESI</span></div>
<div class="m" style="left:650px;top:261.70px;height:16px;line-height:16px;font-size:12.5px;letter-spacing:-0.500px;"><span style="color:#b4b4b4">= ??</span></div>
<div class="m" style="left:120px;top:277.70px;height:16px;line-height:16px;font-size:12.5px;letter-spacing:-0.500px;"><span style="color:#0000ff">35 e2 27</span></div>
</div>
<div style="left:778px;top:513px;width:1px;height:14px;background:#f08080;"></div>
<div style="left:1292px;top:78px;width:626px;height:25px;background:linear-gradient(to right,#aaaaaa 0%,#e8e8e8 58.8%,#ececec 100%);border:1px solid #8e8e8e;box-shadow:inset 1px 1px 0 #fafafa,inset 0 -1px 0 #8a8a8a;"></div>
<div class="t" style="left:1315px;top:80.50px;height:20px;line-height:20px;font-size:13.52px;color:#000;transform:scaleX(1.0518);transform-origin:0 0;">Breakpoints</div>
<div style="left:1292px;top:103px;width:626px;height:281px;background:#ffffff;"></div>
<div style="left:1292px;top:103px;width:626px;height:25px;background:#ffffff;border-bottom:1px solid #e3e3e3;"></div>
<div style="left:1315px;top:104px;width:1px;height:24px;background:#e3e3e3;"></div>
<div style="left:1437px;top:104px;width:1px;height:24px;background:#e3e3e3;"></div>
<div style="left:1559px;top:104px;width:1px;height:24px;background:#e3e3e3;"></div>
<div style="left:1651px;top:104px;width:1px;height:24px;background:#e3e3e3;"></div>
<div style="left:1720px;top:104px;width:1px;height:24px;background:#e3e3e3;"></div>
<div style="left:1842px;top:104px;width:1px;height:24px;background:#e3e3e3;"></div>
<div style="left:1888px;top:104px;width:1px;height:24px;background:#e3e3e3;"></div>
<div class="t" style="left:1302px;top:105.50px;height:20px;line-height:20px;font-size:13.52px;color:#000;transform:scaleX(1.0670);transform-origin:0 0;">...</div>
<div class="t" style="left:1362px;top:105.50px;height:20px;line-height:20px;font-size:13.52px;color:#000;transform:scaleX(1.0221);transform-origin:0 0;">Na...</div>
<div class="t" style="left:1411px;top:104.00px;height:20px;line-height:20px;font-size:13.52px;color:#000;font-weight:bold;transform:scaleX(1.2037);transform-origin:0 0;">3</div>
<div class="t" style="left:1480px;top:105.50px;height:20px;line-height:20px;font-size:13.52px;color:#000;transform:scaleX(1.0272);transform-origin:0 0;">Add..</div>
<div class="t" style="left:1533px;top:104.00px;height:20px;line-height:20px;font-size:13.52px;color:#000;font-weight:bold;transform:scaleX(1.2037);transform-origin:0 0;">2</div>
<div class="t" style="left:1600px;top:105.50px;height:20px;line-height:20px;font-size:13.52px;color:#000;transform:scaleX(1.0670);transform-origin:0 0;">..</div>
<div class="t" style="left:1624px;top:104.00px;height:20px;line-height:20px;font-size:13.52px;color:#000;font-weight:bold;transform:scaleX(1.2037);transform-origin:0 0;">1</div>
<div class="t" style="left:1663px;top:105.50px;height:20px;line-height:20px;font-size:13.52px;color:#000;transform:scaleX(1.0521);transform-origin:0 0;">Length</div>
<div class="t" style="left:1765px;top:105.50px;height:20px;line-height:20px;font-size:13.52px;color:#000;transform:scaleX(1.0153);transform-origin:0 0;">Kinds</div>
<div class="t" style="left:1851px;top:105.50px;height:20px;line-height:20px;font-size:13.52px;color:#000;transform:scaleX(1.0006);transform-origin:0 0;">Lo...</div>
<div class="t" style="left:1898px;top:105.50px;height:20px;line-height:20px;font-size:13.52px;color:#000;transform:scaleX(1.0670);transform-origin:0 0;">...</div>
<div style="left:1292px;top:128px;width:626px;height:20px;background:#eef5fc;"></div>
<svg style="left:1297px;top:131px;" width="14" height="14" viewBox="0 0 14 14"><circle cx="7" cy="7" r="7" fill="#1565b0"/></svg>
<div style="left:1897px;top:131px;width:14px;height:14px;background:#f4f4f4;border:1px solid #b4b4b4;border-radius:2px;"></div>
<svg style="left:1297px;top:151px;" width="14" height="14" viewBox="0 0 14 14"><circle cx="7" cy="7" r="7" fill="#1565b0"/></svg>
<div style="left:1897px;top:151px;width:14px;height:14px;background:#f4f4f4;border:1px solid #b4b4b4;border-radius:2px;"></div>
<div class="t" style="left:1443px;top:128.50px;height:20px;line-height:20px;font-size:13.52px;color:#000;transform:scaleX(1.0616);transform-origin:0 0;">00136dc0</div>
<div class="t" style="left:1565px;top:128.50px;height:20px;line-height:20px;font-size:13.52px;color:#000;transform:scaleX(1.0536);transform-origin:0 0;">libc-2.26.so</div>
<div class="t" style="left:1692px;top:128.50px;height:20px;line-height:20px;font-size:13.52px;color:#000;transform:scaleX(1.0778);transform-origin:0 0;">0x1</div>
<div class="t" style="left:1726px;top:128.50px;height:20px;line-height:20px;font-size:13.52px;color:#000;transform:scaleX(0.9135);transform-origin:0 0;">SW_EXECUTE</div>
<div class="t" style="left:1875px;top:128.50px;height:20px;line-height:20px;font-size:13.52px;color:#000;transform:scaleX(1.0668);transform-origin:0 0;">1</div>
<div class="t" style="left:1443px;top:148.50px;height:20px;line-height:20px;font-size:13.52px;color:#000;transform:scaleX(1.0668);transform-origin:0 0;">00137470</div>
<div class="t" style="left:1565px;top:148.50px;height:20px;line-height:20px;font-size:13.52px;color:#000;transform:scaleX(1.0536);transform-origin:0 0;">libc-2.26.so</div>
<div class="t" style="left:1692px;top:148.50px;height:20px;line-height:20px;font-size:13.52px;color:#000;transform:scaleX(1.0778);transform-origin:0 0;">0x1</div>
<div class="t" style="left:1726px;top:148.50px;height:20px;line-height:20px;font-size:13.52px;color:#000;transform:scaleX(0.9135);transform-origin:0 0;">SW_EXECUTE</div>
<div class="t" style="left:1875px;top:148.50px;height:20px;line-height:20px;font-size:13.52px;color:#000;transform:scaleX(1.0668);transform-origin:0 0;">1</div>
<div style="left:1292px;top:384px;width:626px;height:1px;background:#a8a8a8;"></div>
<div class="t" style="left:1297px;top:389.50px;height:20px;line-height:20px;font-size:13.52px;color:#000;transform:scaleX(1.0436);transform-origin:0 0;">Filter:</div>
<div style="left:1343px;top:388px;width:549px;height:22px;background:#fff;border:1px solid #b8b8b8;"></div>
<div style="left:1292px;top:410px;width:626px;height:1px;background:#b8b8b8;"></div>
<div style="left:1292px;top:414px;width:626px;height:6px;background:#ececec;border-bottom:1px solid #c8c8c8;"></div>
<svg style="left:1599.0px;top:416px;" width="3" height="3" viewBox="0 0 3 3"><circle cx="1.5" cy="1.5" r="1.4" fill="#a8a8a8"/></svg>
<svg style="left:1604.0px;top:416px;" width="3" height="3" viewBox="0 0 3 3"><circle cx="1.5" cy="1.5" r="1.4" fill="#a8a8a8"/></svg>
<svg style="left:1609.0px;top:416px;" width="3" height="3" viewBox="0 0 3 3"><circle cx="1.5" cy="1.5" r="1.4" fill="#a8a8a8"/></svg>
<div style="left:1292px;top:384px;width:626px;height:2px;background:#8a8a8a;"></div>
<div style="left:1292px;top:421px;width:626px;height:283px;background:#ffffff;"></div>
<div style="left:1292px;top:421px;width:626px;height:25px;background:#ffffff;border-bottom:1px solid #e3e3e3;"></div>
<div style="left:1315px;top:422px;width:1px;height:24px;background:#e3e3e3;"></div>
<div style="left:1458px;top:422px;width:1px;height:24px;background:#e3e3e3;"></div>
<div style="left:1601px;top:422px;width:1px;height:24px;background:#e3e3e3;"></div>
<div style="left:1744px;top:422px;width:1px;height:24px;background:#e3e3e3;"></div>
<div style="left:1887px;top:422px;width:1px;height:24px;background:#e3e3e3;"></div>
<div class="t" style="left:1304px;top:423.50px;height:20px;line-height:20px;font-size:13.52px;color:#000;transform:scaleX(1.0670);transform-origin:0 0;">...</div>
<div class="t" style="left:1368px;top:423.50px;height:20px;line-height:20px;font-size:13.52px;color:#000;transform:scaleX(1.0314);transform-origin:0 0;">Name</div>
<div class="t" style="left:1430px;top:422.00px;height:20px;line-height:20px;font-size:13.52px;color:#000;font-weight:bold;transform:scaleX(1.2037);transform-origin:0 0;">2</div>
<div class="t" style="left:1504px;top:423.50px;height:20px;line-height:20px;font-size:13.52px;color:#000;transform:scaleX(1.0122);transform-origin:0 0;">Address</div>
<div class="t" style="left:1574px;top:422.00px;height:20px;line-height:20px;font-size:13.52px;color:#000;font-weight:bold;transform:scaleX(1.2037);transform-origin:0 0;">1</div>
<div class="t" style="left:1657px;top:423.50px;height:20px;line-height:20px;font-size:13.52px;color:#000;transform:scaleX(0.9825);transform-origin:0 0;">Trace</div>
<div class="t" style="left:1785px;top:423.50px;height:20px;line-height:20px;font-size:13.52px;color:#000;transform:scaleX(1.0541);transform-origin:0 0;">Comment</div>
<div class="t" style="left:1903px;top:423.50px;height:20px;line-height:20px;font-size:13.52px;color:#000;transform:scaleX(1.0670);transform-origin:0 0;">...</div>
<div style="left:1292px;top:446px;width:626px;height:20px;background:#eef5fc;"></div>
<svg style="left:1297px;top:449px;" width="14" height="14" viewBox="0 0 14 14"><circle cx="7" cy="7" r="7" fill="#1565b0"/></svg>
<div style="left:1897px;top:449px;width:14px;height:14px;background:#f4f4f4;border:1px solid #b4b4b4;border-radius:2px;"></div>
<div class="t" style="left:1321px;top:446.50px;height:20px;line-height:20px;font-size:13.52px;color:#000;transform:scaleX(1.1900);transform-origin:0 0;">[3][1]</div>
<div class="m" style="left:1464px;top:449.70px;height:16px;line-height:16px;font-size:13.3px;letter-spacing:0.020px;"><span style="color:#000">7ffff7610dc0</span></div>
<div class="t" style="left:1606px;top:446.50px;height:20px;line-height:20px;font-size:13.52px;color:#000;transform:scaleX(1.0781);transform-origin:0 0;">termmines</div>
<div class="t" style="left:1750px;top:446.50px;height:20px;line-height:20px;font-size:13.52px;color:#000;transform:scaleX(1.0489);transform-origin:0 0;">srand</div>
<svg style="left:1297px;top:469px;" width="14" height="14" viewBox="0 0 14 14"><circle cx="7" cy="7" r="7" fill="#1565b0"/></svg>
<div style="left:1897px;top:469px;width:14px;height:14px;background:#f4f4f4;border:1px solid #b4b4b4;border-radius:2px;"></div>
<div class="t" style="left:1321px;top:466.50px;height:20px;line-height:20px;font-size:13.52px;color:#000;transform:scaleX(1.1900);transform-origin:0 0;">[4][1]</div>
<div class="m" style="left:1464px;top:469.70px;height:16px;line-height:16px;font-size:13.3px;letter-spacing:0.020px;"><span style="color:#000">7ffff7611470</span></div>
<div class="t" style="left:1606px;top:466.50px;height:20px;line-height:20px;font-size:13.52px;color:#000;transform:scaleX(1.0781);transform-origin:0 0;">termmines</div>
<div class="t" style="left:1750px;top:466.50px;height:20px;line-height:20px;font-size:13.52px;color:#000;transform:scaleX(1.0686);transform-origin:0 0;">rand</div>
<div style="left:1292px;top:704px;width:626px;height:1px;background:#a8a8a8;"></div>
<div class="t" style="left:1297px;top:709.50px;height:20px;line-height:20px;font-size:13.52px;color:#000;transform:scaleX(1.0436);transform-origin:0 0;">Filter:</div>
<div style="left:1343px;top:708px;width:549px;height:22px;background:#fff;border:1px solid #b8b8b8;"></div>
<div style="left:1755px;top:734px;width:140px;height:3px;background:#8fb4dd;"></div>
<div class="t" style="left:1309px;top:740.50px;height:20px;line-height:20px;font-size:13.52px;color:#000;transform:scaleX(0.9533);transform-origin:0 0;">ed Strings</div>
<svg style="left:1376.5px;top:746px;" width="8" height="8" viewBox="0 0 8 8"><path d="M1 1L7 7M7 1L1 7" stroke="#000" stroke-width="1.9"/></svg>
<div class="t" style="left:1432px;top:740.50px;height:20px;line-height:20px;font-size:13.52px;color:#000;transform:scaleX(1.0258);transform-origin:0 0;">Modules</div>
<svg style="left:1492.5px;top:746px;" width="8" height="8" viewBox="0 0 8 8"><path d="M1 1L7 7M7 1L1 7" stroke="#000" stroke-width="1.9"/></svg>
<div class="t" style="left:1549px;top:740.50px;height:20px;line-height:20px;font-size:13.52px;color:#000;transform:scaleX(1.0242);transform-origin:0 0;">Registers</div>
<svg style="left:1614.5px;top:746px;" width="8" height="8" viewBox="0 0 8 8"><path d="M1 1L7 7M7 1L1 7" stroke="#000" stroke-width="1.9"/></svg>
<div class="t" style="left:1672px;top:740.50px;height:20px;line-height:20px;font-size:13.52px;color:#000;transform:scaleX(1.0501);transform-origin:0 0;">Memory</div>
<svg style="left:1731.5px;top:746px;" width="8" height="8" viewBox="0 0 8 8"><path d="M1 1L7 7M7 1L1 7" stroke="#000" stroke-width="1.9"/></svg>
<div class="t" style="left:1788px;top:740.50px;height:20px;line-height:20px;font-size:13.52px;color:#000;transform:scaleX(1.0518);transform-origin:0 0;">Breakpoints</div>
<svg style="left:1870.5px;top:746px;" width="8" height="8" viewBox="0 0 8 8"><path d="M1 1L7 7M7 1L1 7" stroke="#000" stroke-width="1.9"/></svg>
<div style="left:670px;top:771px;width:1248px;height:24px;background:linear-gradient(to right,#aaaaaa 0%,#e8e8e8 90.5%,#ececec 100%);border:1px solid #8e8e8e;box-shadow:inset 1px 1px 0 #fafafa,inset 0 -1px 0 #8a8a8a;"></div>
<div class="t" style="left:676px;top:773.00px;height:20px;line-height:20px;font-size:13.52px;color:#000;transform:scaleX(1.0654);transform-origin:0 0;">Terminal - local-gdb.sh /tmp/termmines</div>
<svg style="left:1900px;top:777px;" width="12" height="12" viewBox="0 0 12 12"><path d="M1.5 1.5L10.5 10.5M10.5 1.5L1.5 10.5" stroke="#000" stroke-width="2.2" stroke-linecap="butt"/></svg>
<div style="left:669px;top:795px;width:1249px;height:220px;background:#000000;border:2px solid #8a8a8a;border-right:1px solid #cfcfcf;"></div>
<div style="left:1906px;top:797px;width:11px;height:216px;background:#f5f5f5;"></div>
<div style="left:1909px;top:955px;width:6px;height:56px;background:#dcdcdc;border-radius:3px;"></div>
<div style="left:671px;top:797px;width:1235px;height:216px;overflow:hidden">
<div class="m" style="left:1px;top:-7.80px;height:15px;line-height:15px;font-size:12.5px;letter-spacing:-0.500px;font-weight:bold;"><span style="color:#dcdcdc">Reading symbols from </span><span style="color:#5fd700">/tmp/termmines</span><span style="color:#dcdcdc">...</span></div>
<div class="m" style="left:1px;top:7.20px;height:15px;line-height:15px;font-size:12.5px;letter-spacing:-0.500px;font-weight:bold;"><span style="color:#dcdcdc">(No debugging symbols found in </span><span style="color:#5fd700">/tmp/termmines</span><span style="color:#dcdcdc">)</span></div>
<div class="m" style="left:1px;top:22.20px;height:15px;line-height:15px;font-size:12.5px;letter-spacing:-0.500px;font-weight:bold;"><span style="color:#dcdcdc">Connected to Ghidra 11.1 at 127.0.0.1:42275</span></div>
<div class="m" style="left:1px;top:37.20px;height:15px;line-height:15px;font-size:12.5px;letter-spacing:-0.500px;font-weight:bold;"><span style="color:#dcdcdc">Catchpoint 1 (syscalls 'mmap' [9] 'mprotect' [10] 'munmap' [11] 'brk' [12] 'mremap' [25] 'msync' [26] 'mincor</span></div>
<div class="m" style="left:1px;top:52.20px;height:15px;line-height:15px;font-size:12.5px;letter-spacing:-0.500px;font-weight:bold;"><span style="color:#dcdcdc">e' [27] 'madvise' [28] 'shmat' [30] 'shmdt' [67] 'mlock' [149] 'munlock' [150] 'mlockall' [151] 'munlockall'</span></div>
<div class="m" style="left:1px;top:67.20px;height:15px;line-height:15px;font-size:12.5px;letter-spacing:-0.500px;font-weight:bold;"><span style="color:#dcdcdc">[152] 'io_setup' [206] 'io_destroy' [207] 'remap_file_pages' [216] 'mbind' [237] 'set_mempolicy' [238] 'get_m</span></div>
<div class="m" style="left:1px;top:82.20px;height:15px;line-height:15px;font-size:12.5px;letter-spacing:-0.500px;font-weight:bold;"><span style="color:#dcdcdc">empolicy' [239] 'migrate_pages' [256] 'move_pages' [279] 'mlock2' [325] 'pkey_mprotect' [329] 'io_uring_regis</span></div>
<div class="m" style="left:1px;top:97.20px;height:15px;line-height:15px;font-size:12.5px;letter-spacing:-0.500px;font-weight:bold;"><span style="color:#dcdcdc">ter' [427] 'set_mempolicy_home_node' [450])</span></div>
<div class="m" style="left:1px;top:112.20px;height:15px;line-height:15px;font-size:12.5px;letter-spacing:-0.500px;font-weight:bold;"><span style="color:#dcdcdc">Temporary breakpoint 2 at </span><span style="color:#5f5fff">0x400ad0</span></div>
<div class="m" style="left:1px;top:127.20px;height:15px;line-height:15px;font-size:12.5px;letter-spacing:-0.500px;font-weight:bold;"><span style="color:#dcdcdc">Starting program: </span><span style="color:#5fd700">/tmp/termmines</span></div>
<div class="m" style="left:1px;top:142.20px;height:15px;line-height:15px;font-size:12.5px;letter-spacing:-0.500px;font-weight:bold;"><span style="color:#dcdcdc"></span></div>
<div class="m" style="left:1px;top:157.20px;height:15px;line-height:15px;font-size:12.5px;letter-spacing:-0.500px;font-weight:bold;"><span style="color:#dcdcdc">Temporary breakpoint 2, </span><span style="color:#5f5fff">0x0000000000400ad0</span><span style="color:#dcdcdc"> in </span><span style="color:#d7d75f">main</span><span style="color:#dcdcdc"> ()</span></div>
<div class="m" style="left:1px;top:172.20px;height:15px;line-height:15px;font-size:12.5px;letter-spacing:-0.500px;font-weight:bold;"><span style="color:#dcdcdc">(gdb) Breakpoint 3 at </span><span style="color:#5f5fff">0x7ffff7610dc0</span></div>
<div class="m" style="left:1px;top:187.20px;height:15px;line-height:15px;font-size:12.5px;letter-spacing:-0.500px;font-weight:bold;"><span style="color:#dcdcdc">Breakpoint 4 at </span><span style="color:#5f5fff">0x7ffff7611470</span></div>
<div class="m" style="left:1px;top:202.20px;height:15px;line-height:15px;font-size:12.5px;letter-spacing:-0.500px;font-weight:bold;"><span style="color:#dcdcdc">(gdb) </span></div>
</div>
<div style="left:716px;top:998px;width:6px;height:16px;background:transparent;border:1px solid #f0a0c0;"></div>
<div style="left:1045px;top:1016px;width:103px;height:3px;background:#8fb4dd;"></div>
<div class="t" style="left:702px;top:1022.50px;height:20px;line-height:20px;font-size:13.52px;color:#000;transform:scaleX(1.0444);transform-origin:0 0;">Time</div>
<svg style="left:740.5px;top:1028px;" width="8" height="8" viewBox="0 0 8 8"><path d="M1 1L7 7M7 1L1 7" stroke="#000" stroke-width="1.9"/></svg>
<div class="t" style="left:797px;top:1022.50px;height:20px;line-height:20px;font-size:13.52px;color:#000;transform:scaleX(1.0474);transform-origin:0 0;">Static Mappings</div>
<svg style="left:906.5px;top:1028px;" width="8" height="8" viewBox="0 0 8 8"><path d="M1 1L7 7M7 1L1 7" stroke="#000" stroke-width="1.9"/></svg>
<div class="t" style="left:962px;top:1022.50px;height:20px;line-height:20px;font-size:13.52px;color:#000;transform:scaleX(1.0217);transform-origin:0 0;">Threads</div>
<svg style="left:1021.5px;top:1028px;" width="8" height="8" viewBox="0 0 8 8"><path d="M1 1L7 7M7 1L1 7" stroke="#000" stroke-width="1.9"/></svg>
<div class="t" style="left:1062px;top:1022.50px;height:20px;line-height:20px;font-size:13.52px;color:#000;transform:scaleX(1.0433);transform-origin:0 0;">Terminal</div>
<svg style="left:1124.5px;top:1028px;" width="8" height="8" viewBox="0 0 8 8"><path d="M1 1L7 7M7 1L1 7" stroke="#000" stroke-width="1.9"/></svg>
<div style="left:1px;top:1051px;width:1918px;height:26px;background:#f2f2f2;"></div>
<div style="left:24px;top:1052px;width:1411px;height:25px;background:#f2f2f2;border-top:2px solid #8c8c8c;border-left:2px solid #8c8c8c;border-right:1px solid #fff;"></div>
<div style="left:1437px;top:1052px;width:103px;height:25px;background:#f2f2f2;border-top:2px solid #8c8c8c;border-left:2px solid #8c8c8c;border-right:1px solid #fff;"></div>
<div style="left:1543px;top:1052px;width:138px;height:25px;background:#f2f2f2;border-top:2px solid #8c8c8c;border-left:2px solid #8c8c8c;border-right:1px solid #fff;"></div>
<div style="left:1684px;top:1052px;width:208px;height:25px;background:#f2f2f2;border-top:2px solid #8c8c8c;border-left:2px solid #8c8c8c;border-right:1px solid #fff;"></div>
<div style="left:1895px;top:1052px;width:23px;height:25px;background:#f2f2f2;border-top:2px solid #8c8c8c;border-left:2px solid #8c8c8c;border-right:1px solid #fff;"></div>
<div class="t" style="left:1441px;top:1055.00px;height:20px;line-height:20px;font-size:13.52px;color:#000;transform:scaleX(1.0616);transform-origin:0 0;">00136dc0</div>
<div class="t" style="left:1552px;top:1055.00px;height:20px;line-height:20px;font-size:13.52px;color:#000;transform:scaleX(1.0489);transform-origin:0 0;">srand</div>
<div class="t" style="left:1693px;top:1055.00px;height:20px;line-height:20px;font-size:13.52px;color:#000;transform:scaleX(0.9833);transform-origin:0 0;">SUB RSP,0x8</div>
<div style="left:2px;top:78px;width:480px;height:301px;background:transparent;border:1px solid #8e8e8e;border-right:2px solid #7c7c7c;border-bottom:2px solid #7c7c7c;"></div>
<div style="left:2px;top:417px;width:478px;height:350px;background:transparent;border:1px solid #8e8e8e;border-right:2px solid #7c7c7c;border-bottom:2px solid #7c7c7c;"></div>
<div style="left:487px;top:80px;width:799px;height:322px;background:transparent;border:1px solid #8e8e8e;border-right:2px solid #7c7c7c;border-bottom:2px solid #7c7c7c;"></div>
<div style="left:487px;top:409px;width:799px;height:357px;background:transparent;border:1px solid #8e8e8e;border-right:2px solid #7c7c7c;border-bottom:2px solid #7c7c7c;"></div>
<div style="left:1291px;top:78px;width:628px;height:657px;background:transparent;border:1px solid #8e8e8e;border-right:2px solid #7c7c7c;border-bottom:2px solid #7c7c7c;"></div>
<div style="left:2px;top:771px;width:663px;height:245px;background:transparent;border:1px solid #8e8e8e;border-right:2px solid #7c7c7c;border-bottom:2px solid #7c7c7c;"></div>
<div style="left:670px;top:771px;width:1249px;height:245px;background:transparent;border:1px solid #8e8e8e;border-right:2px solid #7c7c7c;border-bottom:2px solid #7c7c7c;"></div>
<svg style="left:9px;top:53px;" width="16" height="16" viewBox="0 0 16 16"><rect x="0.5" y="0.5" width="15" height="15" rx="2" fill="#5b8fdc" stroke="#3c6cc0"/><rect x="3" y="1" width="10" height="5" fill="#e8f0ff"/><rect x="5" y="2" width="2" height="3" fill="#5b8fdc"/><rect x="2.5" y="9" width="11" height="6" fill="#fff"/><rect x="3.5" y="11" width="9" height="2" fill="#6cc04a"/></svg>
<div style="left:34px;top:52px;width:1px;height:19px;background:#c8c8c8;"></div>
<svg style="left:43px;top:53px;" width="16" height="16" viewBox="0 0 16 16"><path d="M1 8L7 2.5V5.5H15V10.5H7V13.5Z" fill="#4fb6f4" stroke="#000" stroke-width="1.2" stroke-linejoin="round"/></svg>
<svg style="left:66px;top:59px;" width="6" height="4" viewBox="0 0 6 4"><path d="M0 0H6L3 3.5Z" fill="#000"/></svg>
<svg style="left:79px;top:53px;" width="16" height="16" viewBox="0 0 16 16"><path d="M15 8L9 2.5V5.5H1V10.5H9V13.5Z" fill="#9a9a9a" stroke="none" stroke-width="1.2" stroke-linejoin="round"/></svg>
<svg style="left:102px;top:59px;" width="6" height="4" viewBox="0 0 6 4"><path d="M0 0H6L3 3.5Z" fill="#9a9a9a"/></svg>
<div style="left:118px;top:52px;width:1px;height:19px;background:#c8c8c8;"></div>
<svg style="left:127px;top:53px;" width="16" height="16" viewBox="0 0 16 16"><path d="M0.5 1.5H7L10 4.5V15.5H0.5Z" fill="#a6a6a6" stroke="#8c8c8c"/><path d="M4 5L6 7M3 10L5 11" stroke="#bdbdbd"/><path d="M8 8H11V5H13V8H16L12 13Z" fill="#8c8c8c"/></svg>
<svg style="left:149px;top:53px;" width="16" height="16" viewBox="0 0 16 16"><path d="M0.5 1.5H7L10 4.5V15.5H0.5Z" fill="#a6a6a6" stroke="#8c8c8c"/><path d="M4 5L6 7M3 10L5 11" stroke="#bdbdbd"/><path d="M8 9H10.5V14H13.5V9H16L12 4Z" fill="#8c8c8c"/></svg>
<svg style="left:171px;top:53px;" width="16" height="16" viewBox="0 0 16 16"><path d="M0.5 1.5H7L10 4.5V15.5H0.5Z" fill="#a6a6a6" stroke="#8c8c8c"/><path d="M4 5L6 7M3 10L5 11" stroke="#bdbdbd"/><path d="M8 8H11V5H13V8H16L12 13Z" fill="#8c8c8c"/></svg>
<svg style="left:193px;top:53px;" width="16" height="16" viewBox="0 0 16 16"><path d="M0.5 1.5H7L10 4.5V15.5H0.5Z" fill="#a6a6a6" stroke="#8c8c8c"/><path d="M4 5L6 7M3 10L5 11" stroke="#bdbdbd"/><path d="M8 9H10.5V14H13.5V9H16L12 4Z" fill="#8c8c8c"/></svg>
<svg style="left:215px;top:53px;" width="16" height="16" viewBox="0 0 16 16"><rect x="0.5" y="0.5" width="11" height="15" fill="#5ec45e" stroke="#000"/><rect x="2" y="2" width="8" height="3" fill="#fff"/><circle cx="4" cy="8" r="1" fill="#d33"/><circle cx="12" cy="12" r="4" fill="#fff" stroke="#888"/><rect x="10.5" y="10.5" width="3" height="3" fill="#111"/></svg>
<div style="left:240px;top:52px;width:1px;height:19px;background:#c8c8c8;"></div>
<svg style="left:251px;top:53px;" width="12" height="16" viewBox="0 0 12 16"><path d="M4.5 0.5H7.5V9H11L6 15L1 9H4.5Z" fill="#4fb6f4" stroke="#0c3c7a" stroke-width="1"/></svg>
<svg style="left:272px;top:54px;" width="14" height="14" viewBox="0 0 14 14"><circle cx="7" cy="7" r="6.5" fill="#e7a0a0"/><circle cx="7" cy="7" r="4" fill="#f4d0d0"/><path d="M4 10L10 4" stroke="#d77a7a" stroke-width="2.4"/></svg>
<svg style="left:295px;top:53px;" width="12" height="16" viewBox="0 0 12 16"><text x="6.0" y="13" text-anchor="middle" font-family="Liberation Serif" font-weight="bold" font-size="16" fill="#4db8f0" stroke="#000" stroke-width="1.5" paint-order="stroke">I</text></svg>
<svg style="left:316px;top:53px;" width="14" height="16" viewBox="0 0 14 16"><text x="7.0" y="13" text-anchor="middle" font-family="Liberation Serif" font-weight="bold" font-size="16" fill="#4db8f0" stroke="#000" stroke-width="1.5" paint-order="stroke">D</text></svg>
<svg style="left:338px;top:53px;" width="14" height="16" viewBox="0 0 14 16"><text x="7.0" y="13" text-anchor="middle" font-family="Liberation Serif" font-weight="bold" font-size="16" fill="#4db8f0" stroke="#000" stroke-width="1.5" paint-order="stroke">U</text></svg>
<svg style="left:361px;top:53px;" width="11" height="16" viewBox="0 0 11 16"><text x="5.5" y="13" text-anchor="middle" font-family="Liberation Serif" font-weight="bold" font-size="16" fill="#4db8f0" stroke="#000" stroke-width="1.5" paint-order="stroke">L</text></svg>
<svg style="left:383px;top:53px;" width="11" height="16" viewBox="0 0 11 16"><text x="5.5" y="13" text-anchor="middle" font-family="Liberation Serif" font-weight="bold" font-size="16" fill="#4db8f0" stroke="#000" stroke-width="1.5" paint-order="stroke">F</text></svg>
<svg style="left:404px;top:53px;" width="14" height="16" viewBox="0 0 14 16"><text x="7.0" y="13" text-anchor="middle" font-family="Liberation Serif" font-weight="bold" font-size="16" fill="#4db8f0" stroke="#000" stroke-width="1.5" paint-order="stroke">V</text></svg>
<svg style="left:427px;top:53px;" width="13" height="16" viewBox="0 0 13 16"><text x="6.5" y="13" text-anchor="middle" font-family="Liberation Serif" font-weight="bold" font-size="16" fill="#4db8f0" stroke="#000" stroke-width="1.5" paint-order="stroke">B</text></svg>
<svg style="left:447px;top:59px;" width="6" height="4" viewBox="0 0 6 4"><path d="M0 0H6L3 3.5Z" fill="#000"/></svg>
<div style="left:464px;top:52px;width:1px;height:19px;background:#c8c8c8;"></div>
<svg style="left:473px;top:53px;" width="16" height="16" viewBox="0 0 16 16"><ellipse cx="7" cy="9" rx="4.5" ry="5.5" fill="#3b6fc4" transform="rotate(35 7 9)"/><path d="M2 5L5 7M1 10H4M3 14L5 12M9 2L10 5M13 8L10 8M12 12L10 11" stroke="#3b6fc4" stroke-width="1.5"/><path d="M12 0.5V5M9.8 2.7H14.2" stroke="#2c9a4c" stroke-width="1.5"/></svg>
<svg style="left:496px;top:59px;" width="6" height="4" viewBox="0 0 6 4"><path d="M0 0H6L3 3.5Z" fill="#000"/></svg>
<svg style="left:509px;top:53px;" width="16" height="16" viewBox="0 0 16 16"><circle cx="6" cy="10" r="4.5" fill="none" stroke="#3b6fc4" stroke-width="3" stroke-dasharray="2 1.5"/><circle cx="6" cy="10" r="3" fill="#3b6fc4"/><circle cx="6" cy="10" r="1.2" fill="#f2f2f2"/><rect x="3" y="0" width="9" height="3" rx="1" fill="#808080"/><rect x="6" y="3" width="3" height="3" fill="#808080"/><rect x="11" y="8" width="5" height="7" fill="#777"/><circle cx="13.5" cy="11.5" r="1.2" fill="#ddd"/></svg>
<div style="left:534px;top:52px;width:1px;height:19px;background:#c8c8c8;"></div>
<svg style="left:544px;top:54px;" width="14" height="14" viewBox="0 0 14 14"><circle cx="7" cy="7" r="6.5" fill="#fff" stroke="#555" stroke-width="1"/><circle cx="7" cy="7" r="4.5" fill="#ff2a2a"/></svg>
<svg style="left:566px;top:59px;" width="6" height="4" viewBox="0 0 6 4"><path d="M0 0H6L3 3.5Z" fill="#000"/></svg>
<svg style="left:583px;top:55px;" width="9" height="11" viewBox="0 0 9 11"><path d="M0 0L9 5.5L0 11Z" fill="#1a8c1a"/></svg>
<svg style="left:603px;top:56px;" width="11" height="11" viewBox="0 0 11 11"><rect x="0" y="0" width="4" height="11" fill="#a0a0a0"/><rect x="7" y="0" width="4" height="11" fill="#a0a0a0"/></svg>
<svg style="left:625px;top:56px;" width="11" height="11" viewBox="0 0 11 11"><rect x="0" y="0" width="11" height="11" fill="#b00000"/></svg>
<svg style="left:646px;top:53px;" width="15" height="16" viewBox="0 0 15 16"><path d="M3 15L8 9M1 12L5 14" stroke="#e0b020" stroke-width="2"/><path d="M7 10L13 3" stroke="#b00000" stroke-width="1.5"/><circle cx="10" cy="7" r="3" fill="#b00000"/></svg>
<svg style="left:667px;top:53px;" width="16" height="16" viewBox="0 0 16 16"><path d="M1 3H8V9" stroke="#d8a300" stroke-width="2.6" fill="none"/><path d="M4.5 8H11.5L8 12Z" fill="#d8a300" stroke="#7a5c00" stroke-width="0.6"/><rect x="1" y="13" width="3" height="3" fill="#0a5fc4"/><rect x="12" y="13" width="3" height="3" fill="#0a5fc4"/></svg>
<svg style="left:689px;top:53px;" width="16" height="16" viewBox="0 0 16 16"><path d="M2 10V3H12V8" stroke="#d8a300" stroke-width="2.6" fill="none"/><path d="M8.5 7H15.5L12 11Z" fill="#d8a300" stroke="#7a5c00" stroke-width="0.6"/><rect x="1" y="13" width="3" height="3" fill="#0a5fc4"/><rect x="12" y="13" width="3" height="3" fill="#0a5fc4"/></svg>
<svg style="left:712px;top:53px;" width="16" height="16" viewBox="0 0 16 16"><path d="M6 13V6H11" stroke="#d8a300" stroke-width="2.6" fill="none"/><path d="M10 2.5V9.5L14 6Z" fill="#d8a300" stroke="#7a5c00" stroke-width="0.6"/><rect x="1" y="13" width="3" height="3" fill="#0a5fc4"/></svg>
<svg style="left:733px;top:53px;" width="16" height="16" viewBox="0 0 16 16"><path d="M7 12H2V2H13V10H9" stroke="#d8a300" stroke-width="2.4" fill="none" stroke-linejoin="round"/><path d="M10 6.5V13.5L5.5 10Z" fill="#d8a300" stroke="#7a5c00" stroke-width="0.6"/></svg>
<svg style="left:755px;top:53px;" width="16" height="16" viewBox="0 0 16 16"><path d="M7 12H2V2H13V10H9" stroke="#d8a300" stroke-width="2.4" fill="none" stroke-linejoin="round"/><path d="M10 6.5V13.5L5.5 10Z" fill="#d8a300" stroke="#7a5c00" stroke-width="0.6"/></svg>
<div style="left:780px;top:52px;width:1px;height:19px;background:#c8c8c8;"></div>
<svg style="left:789px;top:53px;" width="16" height="16" viewBox="0 0 16 16"><path d="M1 3L3 6L8 0" stroke="#909090" stroke-width="1.6" fill="none"/><path d="M6 5H12L15 8V16H6Z" fill="#a6a6a6"/><path d="M14 9H8V7L4 11L8 15V13H14Z" fill="#8a8a8a"/></svg>
<svg style="left:811px;top:53px;" width="16" height="16" viewBox="0 0 16 16"><path d="M1 3L3 6L8 0" stroke="#909090" stroke-width="1.6" fill="none"/><path d="M6 5H12L15 8V16H6Z" fill="#a6a6a6"/><path d="M2 9H8V7L12 11L8 15V13H2Z" fill="#8a8a8a"/></svg>
<div style="left:836px;top:52px;width:1px;height:19px;background:#c8c8c8;"></div>
<svg style="left:845px;top:53px;" width="16" height="16" viewBox="0 0 16 16"><path d="M4 7C6 2 14 3 14 9C14 13 10 15 8 14" stroke="#2eae2e" stroke-width="3.2" fill="none"/><path d="M0 4L7 4L1 10Z" fill="#1b8a1b"/></svg>
<svg style="left:868px;top:59px;" width="6" height="4" viewBox="0 0 6 4"><path d="M0 0H6L3 3.5Z" fill="#000"/></svg>
<svg style="left:881px;top:53px;" width="16" height="16" viewBox="0 0 16 16"><path d="M12 7C10 2 2 3 2 9C2 13 6 15 8 14" stroke="#a0a0a0" stroke-width="3.2" fill="none"/><path d="M16 4L9 4L15 10Z" fill="#909090"/></svg>
<svg style="left:904px;top:59px;" width="6" height="4" viewBox="0 0 6 4"><path d="M0 0H6L3 3.5Z" fill="#9a9a9a"/></svg>
<div style="left:920px;top:52px;width:1px;height:19px;background:#c8c8c8;"></div>
<svg style="left:929px;top:53px;" width="16" height="16" viewBox="0 0 16 16"><path d="M1.5 9L5 14L15 2" stroke="#8a1ce6" stroke-width="2.6" fill="none" stroke-linejoin="round"/></svg>
<svg style="left:952px;top:53px;" width="15" height="16" viewBox="0 0 15 16"><path d="M0.5 0.5H11L14.5 4V15.5H0.5Z" fill="#fff" stroke="#000"/><text x="2" y="7.5" font-family="Liberation Mono" font-weight="bold" font-size="7.5" fill="#000">10</text><text x="2" y="14" font-family="Liberation Mono" font-weight="bold" font-size="7.5" fill="#000">01</text></svg>
<svg style="left:974px;top:53px;" width="15" height="16" viewBox="0 0 15 16"><path d="M3 1H14V14" stroke="#2d7d2d" stroke-width="1" fill="none"/><path d="M2 5L9 12V8L12 11V15H5L8 12H4Z" fill="#5fc45f" stroke="#1d6d1d" stroke-width="0.8"/></svg>
<svg style="left:995px;top:54px;" width="15" height="15" viewBox="0 0 15 15"><rect x="0.5" y="1.5" width="14" height="12" fill="#e8e8e8" stroke="#444"/><path d="M2 2V13" stroke="#222" stroke-width="1.2" stroke-dasharray="1 1"/><rect x="5" y="4" width="8" height="3" fill="#6b8fc4"/><rect x="5" y="8" width="8" height="3" fill="#9ac4a0"/></svg>
<svg style="left:1017px;top:53px;" width="16" height="16" viewBox="0 0 16 16"><path d="M0.5 3.5H6L7.5 1.5H15.5V14.5H0.5Z" fill="#e8c848" stroke="#8a7020"/><text x="8" y="13" text-anchor="middle" font-family="Liberation Sans" font-weight="bold" font-size="8" fill="#222">DT</text></svg>
<svg style="left:1039px;top:54px;" width="15" height="15" viewBox="0 0 15 15"><rect x="0.5" y="1.5" width="14" height="12" fill="#e8e8e8" stroke="#444"/><path d="M2 2V13" stroke="#222" stroke-width="1.2" stroke-dasharray="1 1"/><rect x="5" y="4" width="8" height="3" fill="#6b8fc4"/><rect x="5" y="8" width="8" height="3" fill="#9ac4a0"/></svg>
<svg style="left:1062px;top:53px;" width="16" height="16" viewBox="0 0 16 16"><text x="0" y="11" font-family="Liberation Sans" font-weight="bold" font-size="13" fill="#1a73e8">C</text><text x="8.5" y="15.5" font-family="Liberation Serif" font-style="italic" font-weight="bold" font-size="10" fill="#d030d0">f</text></svg>
<svg style="left:1083px;top:54px;" width="16" height="15" viewBox="0 0 16 15"><rect x="6" y="0" width="4" height="4" fill="#6a9ad8"/><path d="M8 4V7M2 7H14M2 7V10M8 7V10M14 7V10" stroke="#888" stroke-width="1"/><rect x="0" y="10" width="4" height="4" fill="#4aa84a"/><rect x="6" y="10" width="4" height="4" fill="#4aa84a"/><rect x="12" y="10" width="4" height="4" fill="#4aa84a"/></svg>
<svg style="left:1105px;top:54px;" width="15" height="15" viewBox="0 0 15 15"><circle cx="7.5" cy="7.5" r="7.5" fill="#14a03c"/><path d="M5.5 4L11 7.5L5.5 11Z" fill="#fff"/></svg>
<svg style="left:1127px;top:53px;" width="16" height="16" viewBox="0 0 16 16"><rect x="0.5" y="1.5" width="15" height="12" fill="#111" /><rect x="2" y="3" width="12" height="9" fill="#2ec02e"/><rect x="4" y="4" width="3" height="7" fill="#111"/><rect x="9" y="4" width="3" height="7" fill="#111"/><path d="M1 14V16M4 14V16M7 14V16M10 14V16M13 14V16" stroke="#111"/></svg>
<svg style="left:1149px;top:53px;" width="16" height="16" viewBox="0 0 16 16"><path d="M8 0.7L15.3 8L8 15.3L0.7 8Z" fill="#fff" stroke="#1a3aa0" stroke-width="1.2"/><path d="M8 3.5L12.5 8L8 12.5L3.5 8Z" fill="#ff7a10"/></svg>
<svg style="left:1172px;top:54px;" width="15" height="15" viewBox="0 0 15 15"><rect x="0.5" y="0.5" width="14" height="14" fill="#fff" stroke="#7aa4d8"/><path d="M0.5 4H14.5M0.5 7H14.5M0.5 10H14.5M5 4V14.5M10 4V14.5" stroke="#9ab8e0"/></svg>
<svg style="left:1194px;top:54px;" width="15" height="15" viewBox="0 0 15 15"><rect x="0.5" y="0.5" width="14" height="14" fill="#fff" stroke="#7aa4d8"/><path d="M0.5 4H14.5M0.5 7H14.5M0.5 10H14.5M5 4V14.5M10 4V14.5" stroke="#9ab8e0"/></svg>
<svg style="left:1199px;top:60px;" width="11" height="11" viewBox="0 0 11 11"><path d="M0 3H5V0L10 5L5 10V7H0Z" fill="#5fbf3f" stroke="#2a8a2a" stroke-width="0.8"/></svg>
<svg style="left:1215px;top:53px;" width="16" height="16" viewBox="0 0 16 16"><rect x="5.5" y="0.5" width="5" height="5" fill="#fff" stroke="#aaa"/><path d="M8 5V8M2 8H14M2 8V10M8 8V10M14 8V10" stroke="#aaa"/><rect x="0.5" y="10.5" width="4" height="5" fill="#fff" stroke="#aaa"/><rect x="6" y="10.5" width="4" height="5" fill="#fff" stroke="#aaa"/><rect x="11.5" y="10.5" width="4" height="5" fill="#fff" stroke="#aaa"/><rect x="1.5" y="12" width="2" height="2" fill="#7ab0e0"/><rect x="7" y="12" width="2" height="2" fill="#f0a080"/><rect x="12.5" y="12" width="2" height="2" fill="#90d090"/></svg>
<div style="left:1240px;top:52px;width:1px;height:19px;background:#c8c8c8;"></div>
<svg style="left:1249px;top:53px;" width="16" height="16" viewBox="0 0 16 16"><circle cx="6.5" cy="6.5" r="6.5" fill="#9a9a9a"/><path d="M5 3.5L9 6.5L5 9.5Z" fill="#d0d0d0"/><path d="M9 10V14H5M7 12L5 14L7 16" stroke="#9a9a9a" stroke-width="1.5" fill="none"/></svg>
<svg style="left:5px;top:84px;" width="15" height="13" viewBox="0 0 15 13"><rect x="0.75" y="0.75" width="13.5" height="11.5" fill="#fff" stroke="#2a5aa8" stroke-width="1.5"/><path d="M3.5 4L6 6.5L3.5 9" stroke="#2a5aa8" stroke-width="1" fill="none"/></svg>
<svg style="left:437px;top:82px;" width="16" height="16" viewBox="0 0 16 16"><path d="M6 15L3 12L11 1L15 4Z" fill="#f0c020" stroke="#222" stroke-width="1"/><path d="M3 12L6 15L2 15L1 13Z" fill="#f0a0a0"/><path d="M4 10L8 13M6 7L10 10" stroke="#fff" stroke-width="0.8"/><path d="M8 15H15" stroke="#e08080" stroke-width="0.8" stroke-dasharray="1 1"/></svg>
<div style="left:457px;top:82px;width:1px;height:18px;background:#c0c0c0;"></div>
<svg style="left:463px;top:84px;" width="12" height="12" viewBox="0 0 12 12"><path d="M1.2 1.2L10.8 10.8M10.8 1.2L1.2 10.8" stroke="#000" stroke-width="2.2"/></svg>
<svg style="left:459px;top:109px;" width="16" height="17" viewBox="0 0 16 17"><path d="M3.5 0.5H10L14.5 5V16.5H3.5Z" fill="#dcebfa" stroke="#4a90d8"/><path d="M3 8L6 5.5V10.5ZM7 5.5L10 8L7 10.5Z" fill="#4a90d8"/><path d="M0 8H3" stroke="#4a90d8" stroke-width="1.5"/><rect x="5" y="13" width="8" height="1.5" fill="#4a90d8"/></svg>
<svg style="left:342px;top:139px;" width="12" height="12" viewBox="0 0 12 12"><path d="M0.5 11.5H2.5V9.5H4.5V7.5H6.5V5H8.5V3H11.5V0.5H0.5Z" fill="#d8d8d8" stroke="#666" stroke-width="1" stroke-linejoin="round"/><path d="M1.5 8.5H4M1.5 4H7.5M1.5 1.7H10.5" stroke="#fff" stroke-width="1"/></svg>
<svg style="left:436px;top:139px;" width="12" height="12" viewBox="0 0 12 12"><path d="M0.5 11.5H2.5V9.5H4.5V7.5H6.5V5H8.5V3H11.5V0.5H0.5Z" fill="#d8d8d8" stroke="#666" stroke-width="1" stroke-linejoin="round"/><path d="M1.5 8.5H4M1.5 4H7.5M1.5 1.7H10.5" stroke="#fff" stroke-width="1"/></svg>
<svg style="left:13px;top:386px;" width="16" height="16" viewBox="0 0 16 16"><path d="M2 12C-1 6 6 0 12 3" stroke="#e0b020" stroke-width="2.2" fill="none"/><path d="M1 15L4 11" stroke="#e0b020" stroke-width="2.2"/><circle cx="8" cy="8" r="3.5" fill="#2a9a2a"/><path d="M6 8L8 10L14 2" stroke="#2a9a2a" stroke-width="1.8" fill="none"/></svg>
<svg style="left:157px;top:388px;" width="15" height="13" viewBox="0 0 15 13"><rect x="0.75" y="0.75" width="13.5" height="11.5" fill="#fff" stroke="#2a5aa8" stroke-width="1.5"/><path d="M3.5 4L6 6.5L3.5 9" stroke="#2a5aa8" stroke-width="1" fill="none"/></svg>
<svg style="left:6px;top:422px;" width="16" height="15" viewBox="0 0 16 15"><rect x="6" y="0" width="4" height="4" fill="#6a9ad8"/><path d="M8 4V7M2 7H14M2 7V10M8 7V10M14 7V10" stroke="#888" stroke-width="1"/><rect x="0" y="10" width="4" height="4" fill="#4aa84a"/><rect x="6" y="10" width="4" height="4" fill="#4aa84a"/><rect x="12" y="10" width="4" height="4" fill="#4aa84a"/></svg>
<svg style="left:336px;top:421px;" width="16" height="15" viewBox="0 0 16 15"><rect x="6" y="0" width="4" height="4" fill="#6a9ad8"/><path d="M8 4V7M2 7H14M2 7V10M8 7V10M14 7V10" stroke="#888" stroke-width="1"/><rect x="0" y="10" width="4" height="4" fill="#4aa84a"/><rect x="6" y="10" width="4" height="4" fill="#4aa84a"/><rect x="12" y="10" width="4" height="4" fill="#4aa84a"/></svg>
<svg style="left:358px;top:421px;" width="14" height="14" viewBox="0 0 14 14"><rect x="0.5" y="0.5" width="13" height="13" fill="#fff" stroke="#3a70c8"/><text x="7" y="11.5" text-anchor="middle" font-family="Liberation Sans" font-weight="bold" font-size="11.5" fill="#111">E</text></svg>
<svg style="left:380px;top:421px;" width="14" height="14" viewBox="0 0 14 14"><rect x="0.5" y="0.5" width="13" height="13" fill="#fff" stroke="#3a70c8"/><text x="7" y="11.5" text-anchor="middle" font-family="Liberation Sans" font-weight="bold" font-size="11.5" fill="#111">A</text></svg>
<div style="left:404px;top:420px;width:1px;height:18px;background:#c0c0c0;"></div>
<svg style="left:412px;top:421px;" width="17" height="16" viewBox="0 0 17 16"><rect x="5" y="0.5" width="7" height="3" fill="#333"/><rect x="0.5" y="3" width="16" height="12" rx="2" fill="#2a2a2a"/><circle cx="8.5" cy="9" r="4" fill="#888"/><circle cx="8.5" cy="9" r="2.5" fill="#111"/></svg>
<div style="left:433px;top:420px;width:1px;height:18px;background:#c0c0c0;"></div>
<svg style="left:439px;top:425px;" width="12" height="7" viewBox="0 0 12 7"><path d="M0 0H12L6 7Z" fill="#000"/></svg>
<svg style="left:460px;top:422px;" width="12" height="12" viewBox="0 0 12 12"><path d="M1.2 1.2L10.8 10.8M10.8 1.2L1.2 10.8" stroke="#000" stroke-width="2.2"/></svg>
<svg style="left:8px;top:467px;" width="16" height="16" viewBox="0 0 16 16"><ellipse cx="7" cy="9" rx="4.5" ry="5.5" fill="#3b6fc4" transform="rotate(35 7 9)"/><path d="M2 5L5 7M1 10H4M3 14L5 12M9 2L10 5M13 8L10 8M12 12L10 11" stroke="#3b6fc4" stroke-width="1.5"/><path d="M12 0.5V5M9.8 2.7H14.2" stroke="#2c9a4c" stroke-width="1.5"/></svg>
<svg style="left:11px;top:489px;" width="7" height="10" viewBox="0 0 7 10"><path d="M1 1L5 5L1 9" stroke="#9a9a9a" stroke-width="1.1" fill="none"/></svg>
<svg style="left:28px;top:490px;" width="10" height="10" viewBox="0 0 10 10"><circle cx="4.5" cy="4.5" r="4.5" fill="#b00000"/></svg>
<svg style="left:11px;top:508px;" width="7" height="10" viewBox="0 0 7 10"><path d="M1 1L5 5L1 9" stroke="#9a9a9a" stroke-width="1.1" fill="none"/></svg>
<svg style="left:26px;top:506px;" width="14" height="14" viewBox="0 0 14 14"><circle cx="7.0" cy="7.0" r="6.8" fill="#0a66b2"/><path d="M3.46 3.46A5.0 5.0 0 0 1 10.54 10.54Z" fill="#fff"/></svg>
<svg style="left:8px;top:529px;" width="10" height="7" viewBox="0 0 10 7"><path d="M1 1L5 5L9 1" stroke="#9a9a9a" stroke-width="1.1" fill="none"/></svg>
<svg style="left:28px;top:528px;" width="10" height="10" viewBox="0 0 10 10"><circle cx="4.5" cy="4.5" r="4.5" fill="#b00000"/></svg>
<svg style="left:26px;top:548px;" width="10" height="7" viewBox="0 0 10 7"><path d="M1 1L5 5L9 1" stroke="#9a9a9a" stroke-width="1.1" fill="none"/></svg>
<svg style="left:43px;top:545px;" width="16" height="13" viewBox="0 0 16 13"><path d="M1 4H9V1L15 6.5L9 12V9H1Z" fill="#fff" stroke="#444" stroke-width="1.8" stroke-linejoin="round"/></svg>
<svg style="left:47px;top:565px;" width="7" height="10" viewBox="0 0 7 10"><path d="M1 1L5 5L1 9" stroke="#9a9a9a" stroke-width="1.1" fill="none"/></svg>
<svg style="left:62px;top:563px;" width="14" height="14" viewBox="0 0 14 14"><circle cx="7.0" cy="7.0" r="6.8" fill="#0a66b2"/><path d="M3.46 3.46A5.0 5.0 0 0 1 10.54 10.54Z" fill="#fff"/></svg>
<svg style="left:47px;top:584px;" width="7" height="10" viewBox="0 0 7 10"><path d="M1 1L5 5L1 9" stroke="#9a9a9a" stroke-width="1.1" fill="none"/></svg>
<svg style="left:62px;top:581px;" width="16" height="16" viewBox="0 0 16 16"><rect x="0.5" y="1.5" width="15" height="12" fill="#111" /><rect x="2" y="3" width="12" height="9" fill="#2ec02e"/><rect x="4" y="4" width="3" height="7" fill="#111"/><rect x="9" y="4" width="3" height="7" fill="#111"/><path d="M1 14V16M4 14V16M7 14V16M10 14V16M13 14V16" stroke="#111"/></svg>
<svg style="left:47px;top:603px;" width="7" height="10" viewBox="0 0 7 10"><path d="M1 1L5 5L1 9" stroke="#9a9a9a" stroke-width="1.1" fill="none"/></svg>
<svg style="left:62px;top:601px;" width="16" height="16" viewBox="0 0 16 16"><rect x="0.8" y="0.8" width="4.5" height="4.5" fill="none" stroke="#555" stroke-width="1.6"/><rect x="0.8" y="10" width="4.5" height="4.5" fill="none" stroke="#555" stroke-width="1.6"/><rect x="9" y="0" width="6" height="5" fill="#555"/><circle cx="12" cy="12" r="3" fill="#555"/><path d="M5 3H9M12 5V9" stroke="#555" stroke-width="1.5"/></svg>
<svg style="left:44px;top:624px;" width="10" height="7" viewBox="0 0 10 7"><path d="M1 1L5 5L9 1" stroke="#9a9a9a" stroke-width="1.1" fill="none"/></svg>
<svg style="left:64px;top:623px;" width="10" height="10" viewBox="0 0 10 10"><circle cx="4.5" cy="4.5" r="4.5" fill="#b00000"/></svg>
<svg style="left:62px;top:643px;" width="10" height="7" viewBox="0 0 10 7"><path d="M1 1L5 5L9 1" stroke="#9a9a9a" stroke-width="1.1" fill="none"/></svg>
<svg style="left:80px;top:640px;" width="16" height="13" viewBox="0 0 16 13"><path d="M1 4H9V1L15 6.5L9 12V9H1Z" fill="#fff" stroke="#444" stroke-width="1.8" stroke-linejoin="round"/></svg>
<svg style="left:80px;top:662px;" width="10" height="7" viewBox="0 0 10 7"><path d="M1 1L5 5L9 1" stroke="#9a9a9a" stroke-width="1.1" fill="none"/></svg>
<svg style="left:97px;top:658px;" width="14" height="14" viewBox="0 0 14 14"><path d="M0 2H14M0 7H14M0 12H14" stroke="#444" stroke-width="2"/></svg>
<svg style="left:101px;top:679px;" width="7" height="10" viewBox="0 0 7 10"><path d="M1 1L5 5L1 9" stroke="#d8d8d8" stroke-width="1.1" fill="none"/></svg>
<svg style="left:118px;top:680px;" width="10" height="10" viewBox="0 0 10 10"><circle cx="4.5" cy="4.5" r="4.5" fill="#b00000"/></svg>
<svg style="left:100px;top:699px;" width="9" height="9" viewBox="0 0 9 9"><circle cx="4.5" cy="4.5" r="3.3" fill="none" stroke="#b00000" stroke-width="2"/></svg>
<svg style="left:457px;top:741px;" width="16" height="17" viewBox="0 0 16 17"><path d="M3.5 0.5H10L14.5 5V16.5H3.5Z" fill="#dcebfa" stroke="#4a90d8"/><path d="M3 8L6 5.5V10.5ZM7 5.5L10 8L7 10.5Z" fill="#4a90d8"/><path d="M0 8H3" stroke="#4a90d8" stroke-width="1.5"/><rect x="5" y="13" width="8" height="1.5" fill="#4a90d8"/></svg>
<svg style="left:5px;top:776px;" width="14" height="14" viewBox="0 0 14 14"><path d="M0 1.5H14" stroke="#1a8c1a" stroke-width="2"/><path d="M0 6.5H14M0 11.5H14" stroke="#555" stroke-width="2"/></svg>
<svg style="left:63px;top:802px;" width="12" height="12" viewBox="0 0 12 12"><path d="M0.5 0.5H2.5V2.5H4.5V4.5H6.5V7H8.5V9H11.5V11.5H0.5Z" fill="#d8d8d8" stroke="#666" stroke-width="1" stroke-linejoin="round"/><path d="M1.5 3.5H4M1.5 8H7.5M1.5 10.3H10.5" stroke="#fff" stroke-width="1"/></svg>
<svg style="left:603px;top:991px;" width="16" height="17" viewBox="0 0 16 17"><path d="M3.5 0.5H10L14.5 5V16.5H3.5Z" fill="#dcebfa" stroke="#4a90d8"/><path d="M3 8L6 5.5V10.5ZM7 5.5L10 8L7 10.5Z" fill="#4a90d8"/><path d="M0 8H3" stroke="#4a90d8" stroke-width="1.5"/><rect x="5" y="13" width="8" height="1.5" fill="#4a90d8"/></svg>
<svg style="left:629px;top:992px;" width="14" height="16" viewBox="0 0 14 16"><path d="M0 3H14M0 8H14M0 13H14" stroke="#666" stroke-width="1.5"/><rect x="8" y="1" width="2.5" height="4" fill="#666"/><rect x="3" y="6" width="2.5" height="4" fill="#666"/><rect x="9" y="11" width="2.5" height="4" fill="#666"/></svg>
<svg style="left:652px;top:998px;" width="6" height="4" viewBox="0 0 6 4"><path d="M0 0H6L3 3.5Z" fill="#000"/></svg>
<svg style="left:14px;top:1025px;" width="16" height="16" viewBox="0 0 16 16"><rect x="0.5" y="1.5" width="15" height="12" fill="#111" /><rect x="2" y="3" width="12" height="9" fill="#2ec02e"/><rect x="4" y="4" width="3" height="7" fill="#111"/><rect x="9" y="4" width="3" height="7" fill="#111"/><path d="M1 14V16M4 14V16M7 14V16M10 14V16M13 14V16" stroke="#111"/></svg>
<svg style="left:127px;top:1025px;" width="14" height="14" viewBox="0 0 14 14"><path d="M0 2H14M0 7H14M0 12H14" stroke="#2a8a2a" stroke-width="2"/></svg>
<svg style="left:228px;top:1024px;" width="16" height="16" viewBox="0 0 16 16"><rect x="1.5" y="0.5" width="13" height="10" fill="#dfe8f4" stroke="#6c87ac"/><rect x="3" y="2" width="10" height="7" fill="#6aa0dc"/><rect x="6" y="11" width="4" height="2" fill="#888"/><rect x="3" y="13" width="10" height="2" fill="#aaa"/></svg>
<svg style="left:343px;top:1025px;" width="14" height="16" viewBox="0 0 14 16"><path d="M2 1L13 7.5L2 14L5 7.5Z" fill="none" stroke="#222" stroke-width="1.8" stroke-linejoin="round"/><circle cx="4" cy="7.5" r="1.2" fill="#222"/></svg>
<svg style="left:461px;top:1023px;" width="16" height="16" viewBox="0 0 16 16"><rect x="5.5" y="0.5" width="5" height="5" fill="#fff" stroke="#aaa"/><path d="M8 5V8M2 8H14M2 8V10M8 8V10M14 8V10" stroke="#aaa"/><rect x="0.5" y="10.5" width="4" height="5" fill="#fff" stroke="#aaa"/><rect x="6" y="10.5" width="4" height="5" fill="#fff" stroke="#aaa"/><rect x="11.5" y="10.5" width="4" height="5" fill="#fff" stroke="#aaa"/><rect x="1.5" y="12" width="2" height="2" fill="#7ab0e0"/><rect x="7" y="12" width="2" height="2" fill="#f0a080"/><rect x="12.5" y="12" width="2" height="2" fill="#90d090"/></svg>
<svg style="left:491px;top:85px;" width="14" height="13" viewBox="0 0 14 13"><rect x="0.5" y="0.5" width="13" height="12" fill="#eee" stroke="#555"/><path d="M2 1V12" stroke="#222" stroke-width="1.2" stroke-dasharray="1 1"/><rect x="4.5" y="3" width="7.5" height="3" fill="#4a6fb0"/><rect x="4.5" y="7" width="7.5" height="3" fill="#90b8a8"/></svg>
<svg style="left:957px;top:84px;" width="14" height="16" viewBox="0 0 14 16"><rect x="0" y="0" width="8" height="10" fill="#bcbcbc"/><rect x="5" y="5" width="9" height="10" fill="#a8a8a8"/></svg>
<svg style="left:977px;top:84px;" width="16" height="16" viewBox="0 0 16 16"><rect x="0.5" y="1" width="9" height="12" rx="2" fill="#b4b4b4"/><rect x="5" y="4" width="10" height="12" rx="2" fill="#a8a8a8" stroke="#f2f2f2" stroke-width="0.6"/></svg>
<div style="left:1002px;top:82px;width:1px;height:19px;background:#c0c0c0;"></div>
<svg style="left:1011px;top:84px;" width="16" height="16" viewBox="0 0 16 16"><path d="M3 7A5 5 0 0 1 12 4" stroke="#4a8ad8" stroke-width="2.2" fill="none"/><path d="M10 1L14 5L9 6Z" fill="#4a8ad8"/><path d="M13 9A5 5 0 0 1 4 12" stroke="#7ab0e8" stroke-width="2.2" fill="none"/><path d="M6 15L2 11L7 10Z" fill="#7ab0e8"/></svg>
<div style="left:1036px;top:82px;width:1px;height:19px;background:#c0c0c0;"></div>
<div style="left:1043px;top:81px;width:20px;height:22px;background:#f6f6f6;border:1px solid #d0d0d0;border-left-color:#8a8a8a;border-top-color:#8a8a8a;"></div>
<svg style="left:1045px;top:84px;" width="16" height="16" viewBox="0 0 16 16"><path d="M1 0.5V12L4 9L6.5 14L8.5 13L6 8H10Z" fill="#fff" stroke="#000" stroke-width="1"/><rect x="8" y="10" width="8" height="5" fill="#f4d060"/></svg>
<div style="left:1070px;top:82px;width:1px;height:19px;background:#c0c0c0;"></div>
<svg style="left:1079px;top:84px;" width="16" height="16" viewBox="0 0 16 16"><rect x="0.5" y="0.5" width="15" height="10" fill="#fff" stroke="#444"/><path d="M0.5 3.5H15.5M0.5 7H15.5" stroke="#444"/><rect x="6" y="4" width="4" height="2.5" fill="#f4c040"/><path d="M8 11V15M5.5 13L8 15.5L10.5 13" stroke="#222" stroke-width="1.3" fill="none"/></svg>
<svg style="left:1101px;top:84px;" width="16" height="16" viewBox="0 0 16 16"><path d="M1 1V15M15 1V15" stroke="#4a80d0" stroke-width="1.2"/><path d="M4 2H12M4 5H12M4 9H12M4 13H12" stroke="#a0b8d8" stroke-width="1"/><path d="M3 12L7 8L9 10L14 4" stroke="#3aa03a" stroke-width="2" fill="none"/></svg>
<div style="left:1126px;top:82px;width:1px;height:19px;background:#c0c0c0;"></div>
<svg style="left:1135px;top:84px;" width="17" height="16" viewBox="0 0 17 16"><rect x="5" y="0.5" width="7" height="3" fill="#333"/><rect x="0.5" y="3" width="16" height="12" rx="2" fill="#2a2a2a"/><circle cx="8.5" cy="9" r="4" fill="#888"/><circle cx="8.5" cy="9" r="2.5" fill="#111"/></svg>
<div style="left:1160px;top:82px;width:1px;height:19px;background:#c0c0c0;"></div>
<svg style="left:1169px;top:84px;" width="16" height="15" viewBox="0 0 16 15"><path d="M1 5H9V1.5L15 7.5L9 13.5V10H1Z" fill="#fff" stroke="#333" stroke-width="1.6" stroke-linejoin="round"/></svg>
<svg style="left:1192px;top:90px;" width="6" height="4" viewBox="0 0 6 4"><path d="M0 0H6L3 3.5Z" fill="#000"/></svg>
<svg style="left:1205px;top:84px;" width="14" height="15" viewBox="0 0 14 15"><path d="M2 1L13 7.5L2 14L5 7.5Z" fill="none" stroke="#333" stroke-width="1.8" stroke-linejoin="round"/></svg>
<svg style="left:1227px;top:90px;" width="6" height="4" viewBox="0 0 6 4"><path d="M0 0H6L3 3.5Z" fill="#000"/></svg>
<div style="left:1239px;top:82px;width:1px;height:19px;background:#c0c0c0;"></div>
<svg style="left:1245px;top:88px;" width="12" height="7" viewBox="0 0 12 7"><path d="M0 0H12L6 7Z" fill="#000"/></svg>
<svg style="left:1267px;top:85px;" width="12" height="12" viewBox="0 0 12 12"><path d="M1.2 1.2L10.8 10.8M10.8 1.2L1.2 10.8" stroke="#000" stroke-width="2.2"/></svg>
<svg style="left:496px;top:110px;" width="12" height="12" viewBox="0 0 12 12"><circle cx="6" cy="6" r="5.8" fill="#fff"/><circle cx="6" cy="6" r="4.3" fill="#ff2020"/></svg>
<svg style="left:491px;top:415px;" width="14" height="13" viewBox="0 0 14 13"><rect x="0.5" y="0.5" width="13" height="12" fill="#eee" stroke="#555"/><path d="M2 1V12" stroke="#222" stroke-width="1.2" stroke-dasharray="1 1"/><rect x="4.5" y="3" width="7.5" height="3" fill="#4a6fb0"/><rect x="4.5" y="7" width="7.5" height="3" fill="#90b8a8"/></svg>
<svg style="left:1047px;top:413px;" width="14" height="16" viewBox="0 0 14 16"><rect x="0" y="0" width="8" height="10" fill="#bcbcbc"/><rect x="5" y="5" width="9" height="10" fill="#a8a8a8"/></svg>
<svg style="left:1069px;top:413px;" width="16" height="16" viewBox="0 0 16 16"><rect x="0.5" y="1" width="9" height="12" rx="2" fill="#b4b4b4"/><rect x="5" y="4" width="10" height="12" rx="2" fill="#a8a8a8" stroke="#f2f2f2" stroke-width="0.6"/></svg>
<div style="left:1094px;top:411px;width:1px;height:19px;background:#c0c0c0;"></div>
<div style="left:1101px;top:411px;width:20px;height:22px;background:#f6f6f6;border:1px solid #d0d0d0;border-left-color:#8a8a8a;border-top-color:#8a8a8a;"></div>
<svg style="left:1103px;top:414px;" width="16" height="16" viewBox="0 0 16 16"><path d="M1 0.5V12L4 9L6.5 14L8.5 13L6 8H10Z" fill="#fff" stroke="#000" stroke-width="1"/><rect x="8" y="10" width="8" height="5" fill="#f4d060"/></svg>
<div style="left:1128px;top:411px;width:1px;height:19px;background:#c0c0c0;"></div>
<svg style="left:1137px;top:413px;" width="16" height="16" viewBox="0 0 16 16"><rect x="0.5" y="0.5" width="15" height="10" fill="#fff" stroke="#444"/><path d="M0.5 3.5H15.5M0.5 7H15.5" stroke="#444"/><rect x="6" y="4" width="4" height="2.5" fill="#f4c040"/><path d="M8 11V15M5.5 13L8 15.5L10.5 13" stroke="#222" stroke-width="1.3" fill="none"/></svg>
<svg style="left:1159px;top:413px;" width="16" height="16" viewBox="0 0 16 16"><path d="M1 1V15M15 1V15" stroke="#4a80d0" stroke-width="1.2"/><path d="M4 2H12M4 5H12M4 9H12M4 13H12" stroke="#a0b8d8" stroke-width="1"/><path d="M3 12L7 8L9 10L14 4" stroke="#3aa03a" stroke-width="2" fill="none"/></svg>
<div style="left:1184px;top:411px;width:1px;height:19px;background:#c0c0c0;"></div>
<svg style="left:1193px;top:413px;" width="17" height="16" viewBox="0 0 17 16"><rect x="5" y="0.5" width="7" height="3" fill="#333"/><rect x="0.5" y="3" width="16" height="12" rx="2" fill="#2a2a2a"/><circle cx="8.5" cy="9" r="4" fill="#888"/><circle cx="8.5" cy="9" r="2.5" fill="#111"/></svg>
<div style="left:1218px;top:411px;width:1px;height:19px;background:#c0c0c0;"></div>
<svg style="left:1227px;top:413px;" width="16" height="16" viewBox="0 0 16 16"><rect x="0.5" y="0.5" width="11" height="15" fill="#fff" stroke="#666" stroke-dasharray="1.5 1"/><rect x="3" y="5" width="6" height="5" fill="#8ab0d8"/><rect x="12" y="0" width="4" height="16" fill="#e8b030" stroke="#8a6010" stroke-width="0.6"/></svg>
<svg style="left:1249px;top:419px;" width="6" height="4" viewBox="0 0 6 4"><path d="M0 0H6L3 3.5Z" fill="#000"/></svg>
<div style="left:1261px;top:411px;width:1px;height:19px;background:#c0c0c0;"></div>
<svg style="left:1267px;top:415px;" width="12" height="12" viewBox="0 0 12 12"><path d="M1.2 1.2L10.8 10.8M10.8 1.2L1.2 10.8" stroke="#000" stroke-width="2.2"/></svg>
<svg style="left:1296px;top:83px;" width="14" height="14" viewBox="0 0 14 14"><circle cx="7.0" cy="7.0" r="6.8" fill="#0a66b2"/><path d="M3.46 3.46A5.0 5.0 0 0 1 10.54 10.54Z" fill="#fff"/></svg>
<svg style="left:1675px;top:83px;" width="15" height="15" viewBox="0 0 15 15"><circle cx="7.5" cy="7.5" r="7.2" fill="#9a9a9a"/></svg>
<svg style="left:1697px;top:83px;" width="15" height="15" viewBox="0 0 15 15"><circle cx="7.5" cy="7.5" r="7.2" fill="#1565b0"/></svg>
<svg style="left:1705px;top:81px;" width="7" height="7" viewBox="0 0 7 7"><path d="M3.5 0L4.3 2.5L7 2.5L4.8 4L5.6 6.5L3.5 5L1.4 6.5L2.2 4L0 2.5L2.7 2.5Z" fill="#f0b000" stroke="#8a6000" stroke-width="0.4"/></svg>
<svg style="left:1720px;top:83px;" width="15" height="15" viewBox="0 0 15 15"><circle cx="7.5" cy="7.5" r="5.9" fill="none" stroke="#9a9a9a" stroke-width="2.8"/></svg>
<svg style="left:1742px;top:83px;" width="15" height="15" viewBox="0 0 15 15"><circle cx="7.5" cy="7.5" r="5.9" fill="#fff" stroke="#1565b0" stroke-width="2.8"/></svg>
<svg style="left:1750px;top:81px;" width="7" height="7" viewBox="0 0 7 7"><path d="M3.5 0L4.3 2.5L7 2.5L4.8 4L5.6 6.5L3.5 5L1.4 6.5L2.2 4L0 2.5L2.7 2.5Z" fill="#f0b000" stroke="#8a6000" stroke-width="0.4"/></svg>
<svg style="left:1764px;top:82px;" width="16" height="16" viewBox="0 0 16 16"><circle cx="5" cy="5" r="4.5" fill="#a0a0a0"/><circle cx="10.5" cy="10.5" r="4.5" fill="#a0a0a0"/></svg>
<div style="left:1788px;top:82px;width:1px;height:19px;background:#c0c0c0;"></div>
<svg style="left:1797px;top:83px;" width="15" height="15" viewBox="0 0 15 15"><circle cx="7.5" cy="7.5" r="7.5" fill="#a8a8a8"/><path d="M4.5 4.5L10.5 10.5M10.5 4.5L4.5 10.5" stroke="#fff" stroke-width="2"/></svg>
<svg style="left:1819px;top:83px;" width="15" height="15" viewBox="0 0 15 15"><circle cx="7.5" cy="7.5" r="7.5" fill="#1565b0"/><path d="M4.5 4.5L10.5 10.5M10.5 4.5L4.5 10.5" stroke="#fff" stroke-width="2"/></svg>
<svg style="left:1828px;top:81px;" width="7" height="7" viewBox="0 0 7 7"><path d="M3.5 0L4.3 2.5L7 2.5L4.8 4L5.6 6.5L3.5 5L1.4 6.5L2.2 4L0 2.5L2.7 2.5Z" fill="#f0b000" stroke="#8a6000" stroke-width="0.4"/></svg>
<div style="left:1844px;top:82px;width:1px;height:19px;background:#c0c0c0;"></div>
<svg style="left:1853px;top:83px;" width="16" height="16" viewBox="0 0 16 16"><circle cx="7" cy="7" r="6" fill="#f4f4f4" stroke="#888" stroke-width="1.3"/><path d="M11 11L16 16" stroke="#666" stroke-width="2"/><rect x="4" y="4" width="6" height="6" fill="none" stroke="#777" stroke-dasharray="1.5 1"/></svg>
<svg style="left:1875px;top:83px;" width="14" height="16" viewBox="0 0 14 16"><path d="M0 3H14M0 8H14M0 13H14" stroke="#666" stroke-width="1.5"/><rect x="8" y="1" width="2.5" height="4" fill="#666"/><rect x="3" y="6" width="2.5" height="4" fill="#666"/><rect x="9" y="11" width="2.5" height="4" fill="#666"/></svg>
<div style="left:1895px;top:82px;width:1px;height:19px;background:#c0c0c0;"></div>
<svg style="left:1901px;top:84px;" width="12" height="12" viewBox="0 0 12 12"><path d="M1.2 1.2L10.8 10.8M10.8 1.2L1.2 10.8" stroke="#000" stroke-width="2.2"/></svg>
<svg style="left:1395px;top:109px;" width="12" height="12" viewBox="0 0 12 12"><path d="M0.5 0.5H2.5V2.5H4.5V4.5H6.5V7H8.5V9H11.5V11.5H0.5Z" fill="#d8d8d8" stroke="#666" stroke-width="1" stroke-linejoin="round"/><path d="M1.5 3.5H4M1.5 8H7.5M1.5 10.3H10.5" stroke="#fff" stroke-width="1"/></svg>
<svg style="left:1516px;top:109px;" width="12" height="12" viewBox="0 0 12 12"><path d="M0.5 0.5H2.5V2.5H4.5V4.5H6.5V7H8.5V9H11.5V11.5H0.5Z" fill="#d8d8d8" stroke="#666" stroke-width="1" stroke-linejoin="round"/><path d="M1.5 3.5H4M1.5 8H7.5M1.5 10.3H10.5" stroke="#fff" stroke-width="1"/></svg>
<svg style="left:1608px;top:109px;" width="12" height="12" viewBox="0 0 12 12"><path d="M0.5 0.5H2.5V2.5H4.5V4.5H6.5V7H8.5V9H11.5V11.5H0.5Z" fill="#d8d8d8" stroke="#666" stroke-width="1" stroke-linejoin="round"/><path d="M1.5 3.5H4M1.5 8H7.5M1.5 10.3H10.5" stroke="#fff" stroke-width="1"/></svg>
<svg style="left:1897px;top:390px;" width="16" height="17" viewBox="0 0 16 17"><path d="M3.5 0.5H10L14.5 5V16.5H3.5Z" fill="#dcebfa" stroke="#4a90d8"/><path d="M3 8L6 5.5V10.5ZM7 5.5L10 8L7 10.5Z" fill="#4a90d8"/><path d="M0 8H3" stroke="#4a90d8" stroke-width="1.5"/><rect x="5" y="13" width="8" height="1.5" fill="#4a90d8"/></svg>
<svg style="left:1416px;top:427px;" width="12" height="12" viewBox="0 0 12 12"><path d="M0.5 0.5H2.5V2.5H4.5V4.5H6.5V7H8.5V9H11.5V11.5H0.5Z" fill="#d8d8d8" stroke="#666" stroke-width="1" stroke-linejoin="round"/><path d="M1.5 3.5H4M1.5 8H7.5M1.5 10.3H10.5" stroke="#fff" stroke-width="1"/></svg>
<svg style="left:1558px;top:427px;" width="12" height="12" viewBox="0 0 12 12"><path d="M0.5 0.5H2.5V2.5H4.5V4.5H6.5V7H8.5V9H11.5V11.5H0.5Z" fill="#d8d8d8" stroke="#666" stroke-width="1" stroke-linejoin="round"/><path d="M1.5 3.5H4M1.5 8H7.5M1.5 10.3H10.5" stroke="#fff" stroke-width="1"/></svg>
<svg style="left:1897px;top:710px;" width="16" height="17" viewBox="0 0 16 17"><path d="M3.5 0.5H10L14.5 5V16.5H3.5Z" fill="#dcebfa" stroke="#4a90d8"/><path d="M3 8L6 5.5V10.5ZM7 5.5L10 8L7 10.5Z" fill="#4a90d8"/><path d="M0 8H3" stroke="#4a90d8" stroke-width="1.5"/><rect x="5" y="13" width="8" height="1.5" fill="#4a90d8"/></svg>
<svg style="left:1295px;top:744px;" width="8" height="12" viewBox="0 0 8 12"><path d="M6 1L1 6L6 11" stroke="#222" stroke-width="1.3" fill="none"/></svg>
<svg style="left:1412px;top:743px;" width="16" height="16" viewBox="0 0 16 16"><rect x="0.8" y="0.8" width="4.5" height="4.5" fill="none" stroke="#555" stroke-width="1.6"/><rect x="0.8" y="10" width="4.5" height="4.5" fill="none" stroke="#555" stroke-width="1.6"/><rect x="9" y="0" width="6" height="5" fill="#555"/><circle cx="12" cy="12" r="3" fill="#555"/><path d="M5 3H9M12 5V9" stroke="#555" stroke-width="1.5"/></svg>
<svg style="left:1529px;top:743px;" width="15" height="15" viewBox="0 0 15 15"><rect x="0.5" y="0.5" width="14" height="5" fill="#fff" stroke="#555"/><rect x="3.5" y="5.5" width="11" height="5" fill="#fff" stroke="#555"/><rect x="6.5" y="10.5" width="8" height="4" fill="#fff" stroke="#555"/></svg>
<svg style="left:1652px;top:742px;" width="15" height="16" viewBox="0 0 15 16"><path d="M0.5 0.5H11L14.5 4V15.5H0.5Z" fill="#fff" stroke="#000"/><text x="2" y="7.5" font-family="Liberation Mono" font-weight="bold" font-size="7.5" fill="#000">10</text><text x="2" y="14" font-family="Liberation Mono" font-weight="bold" font-size="7.5" fill="#000">01</text></svg>
<svg style="left:1767px;top:743px;" width="14" height="14" viewBox="0 0 14 14"><circle cx="7.0" cy="7.0" r="6.8" fill="#0a66b2"/><path d="M3.46 3.46A5.0 5.0 0 0 1 10.54 10.54Z" fill="#fff"/></svg>
<svg style="left:1901px;top:746px;" width="12" height="9" viewBox="0 0 12 9"><path d="M1 7L6 2L11 7" stroke="#222" stroke-width="1.3" fill="none"/></svg>
<svg style="left:1831px;top:776px;" width="14" height="16" viewBox="0 0 14 16"><rect x="0" y="0" width="8" height="10" fill="#bcbcbc"/><rect x="5" y="5" width="9" height="10" fill="#a8a8a8"/></svg>
<svg style="left:1853px;top:776px;" width="16" height="16" viewBox="0 0 16 16"><rect x="0.5" y="1" width="9" height="12" rx="2" fill="#b4b4b4"/><rect x="5" y="4" width="10" height="12" rx="2" fill="#a8a8a8" stroke="#f2f2f2" stroke-width="0.6"/></svg>
<div style="left:1873px;top:774px;width:1px;height:19px;background:#c0c0c0;"></div>
<svg style="left:1879px;top:780px;" width="12" height="7" viewBox="0 0 12 7"><path d="M0 0H12L6 7Z" fill="#000"/></svg>
<svg style="left:682px;top:1025px;" width="15" height="15" viewBox="0 0 15 15"><circle cx="7.5" cy="7.5" r="6.8" fill="#fff" stroke="#e0a040" stroke-width="1.3"/><circle cx="7.5" cy="7.5" r="5" fill="#eef4fc" stroke="#6a90c0" stroke-width="0.8"/><path d="M7.5 3.5V7.5L10 9" stroke="#444" stroke-width="1.2" fill="none"/></svg>
<svg style="left:778px;top:1024px;" width="13" height="16" viewBox="0 0 13 16"><path d="M0.5 0.5H9L12.5 4V15.5H0.5Z" fill="#fff" stroke="#c89040"/><path d="M3 5H10M3 7.5H10M3 10H10M3 12.5H10" stroke="#8aa0c8" stroke-width="0.9"/></svg>
<svg style="left:943px;top:1024px;" width="16" height="16" viewBox="0 0 16 16"><ellipse cx="7" cy="9" rx="4.5" ry="5.5" fill="#3b6fc4" transform="rotate(35 7 9)"/><path d="M2 5L5 7M1 10H4M3 14L5 12M9 2L10 5M13 8L10 8M12 12L10 11" stroke="#3b6fc4" stroke-width="1.5"/><path d="M12 0.5V5M9.8 2.7H14.2" stroke="#2c9a4c" stroke-width="1.5"/></svg>
<svg style="left:4px;top:1057px;" width="16" height="16" viewBox="0 0 16 16"><circle cx="8" cy="8" r="7.5" fill="#fff" stroke="#555"/><path d="M3 12C4 7 7 4 12 4L13 6L10 7L12 11L9 9L6 13Z" fill="#d02020"/></svg>
<div style="left:1260px;top:483px;width:4px;height:17px;background:#dedede;border-radius:2px;"></div>
<div style="left:1275px;top:465px;width:9px;height:18px;background:#a8a8a8;"></div>
<div style="left:1275px;top:487px;width:9px;height:36px;background:#a8a8a8;"></div>
<div style="left:1275px;top:542px;width:9px;height:5px;background:#a8a8a8;"></div>
<div style="left:1275px;top:550px;width:9px;height:9px;background:#a8a8a8;"></div>
<div style="left:1275px;top:563px;width:9px;height:4px;background:#a8a8a8;"></div>
<div style="left:1275px;top:570px;width:9px;height:6px;background:#a8a8a8;"></div>
<div style="left:1275px;top:591px;width:9px;height:3px;background:#a8a8a8;"></div>
<div style="left:1275px;top:596px;width:9px;height:6px;background:#a8a8a8;"></div>
<div style="left:1275px;top:605px;width:9px;height:5px;background:#a8a8a8;"></div>
<div style="left:1275px;top:615px;width:9px;height:4px;background:#a8a8a8;"></div>
<div style="left:1275px;top:629px;width:9px;height:4px;background:#a8a8a8;"></div>
<div style="left:1275px;top:641px;width:9px;height:8px;background:#a8a8a8;"></div>
<div style="left:1275px;top:671px;width:9px;height:4px;background:#a8a8a8;"></div>
<div style="left:1275px;top:678px;width:9px;height:4px;background:#a8a8a8;"></div>
<div style="left:1275px;top:685px;width:9px;height:4px;background:#a8a8a8;"></div>
<div style="left:1275px;top:692px;width:9px;height:5px;background:#a8a8a8;"></div>
<div style="left:1275px;top:726px;width:9px;height:9px;background:#a8a8a8;"></div>
<div style="left:1276px;top:480px;width:8px;height:4px;background:#b4c8e0;"></div>
<div style="left:1267px;top:467px;width:11px;height:4px;background:#d8c8a8;border:1px solid #e8a020;"></div>
<div style="left:1267px;top:471px;width:11px;height:4px;background:#d8c8a8;border:1px solid #e8a020;"></div>
<div style="left:1267px;top:475px;width:11px;height:5px;background:#d8c8a8;border:1px solid #e8a020;"></div>
<div style="left:1267px;top:481px;width:11px;height:5px;background:#d8c8a8;border:1px solid #d03050;"></div>
<div style="left:1267px;top:514px;width:11px;height:4px;background:#d8c8a8;border:1px solid #e8a020;"></div>
<div style="left:1267px;top:518px;width:11px;height:5px;background:#d8c8a8;border:1px solid #e8a020;"></div>
<div style="left:1267px;top:523px;width:11px;height:4px;background:#d8c8a8;border:1px solid #e8a020;"></div>
<div style="left:1267px;top:528px;width:11px;height:5px;background:#d8c8a8;border:1px solid #d03050;"></div>
<div style="left:1267px;top:543px;width:11px;height:5px;background:#d8c8a8;border:1px solid #e8a020;"></div>
<div style="left:1267px;top:550px;width:11px;height:5px;background:#d8c8a8;border:1px solid #e8a020;"></div>
<div style="left:1267px;top:559px;width:11px;height:9px;background:#d8c8a8;border:1px solid #e8a020;"></div>
<div style="left:1267px;top:617px;width:11px;height:4px;background:#d8c8a8;border:1px solid #d03050;"></div>
<div style="left:1267px;top:630px;width:11px;height:4px;background:#d8c8a8;border:1px solid #e8a020;"></div>
<div style="left:1267px;top:645px;width:11px;height:5px;background:#d8c8a8;border:1px solid #e8a020;"></div>
<div style="left:1267px;top:671px;width:11px;height:5px;background:#d8c8a8;border:1px solid #e8a020;"></div>
<div style="left:1267px;top:728px;width:11px;height:5px;background:#d8c8a8;border:1px solid #e8d020;"></div>
</body></html>
